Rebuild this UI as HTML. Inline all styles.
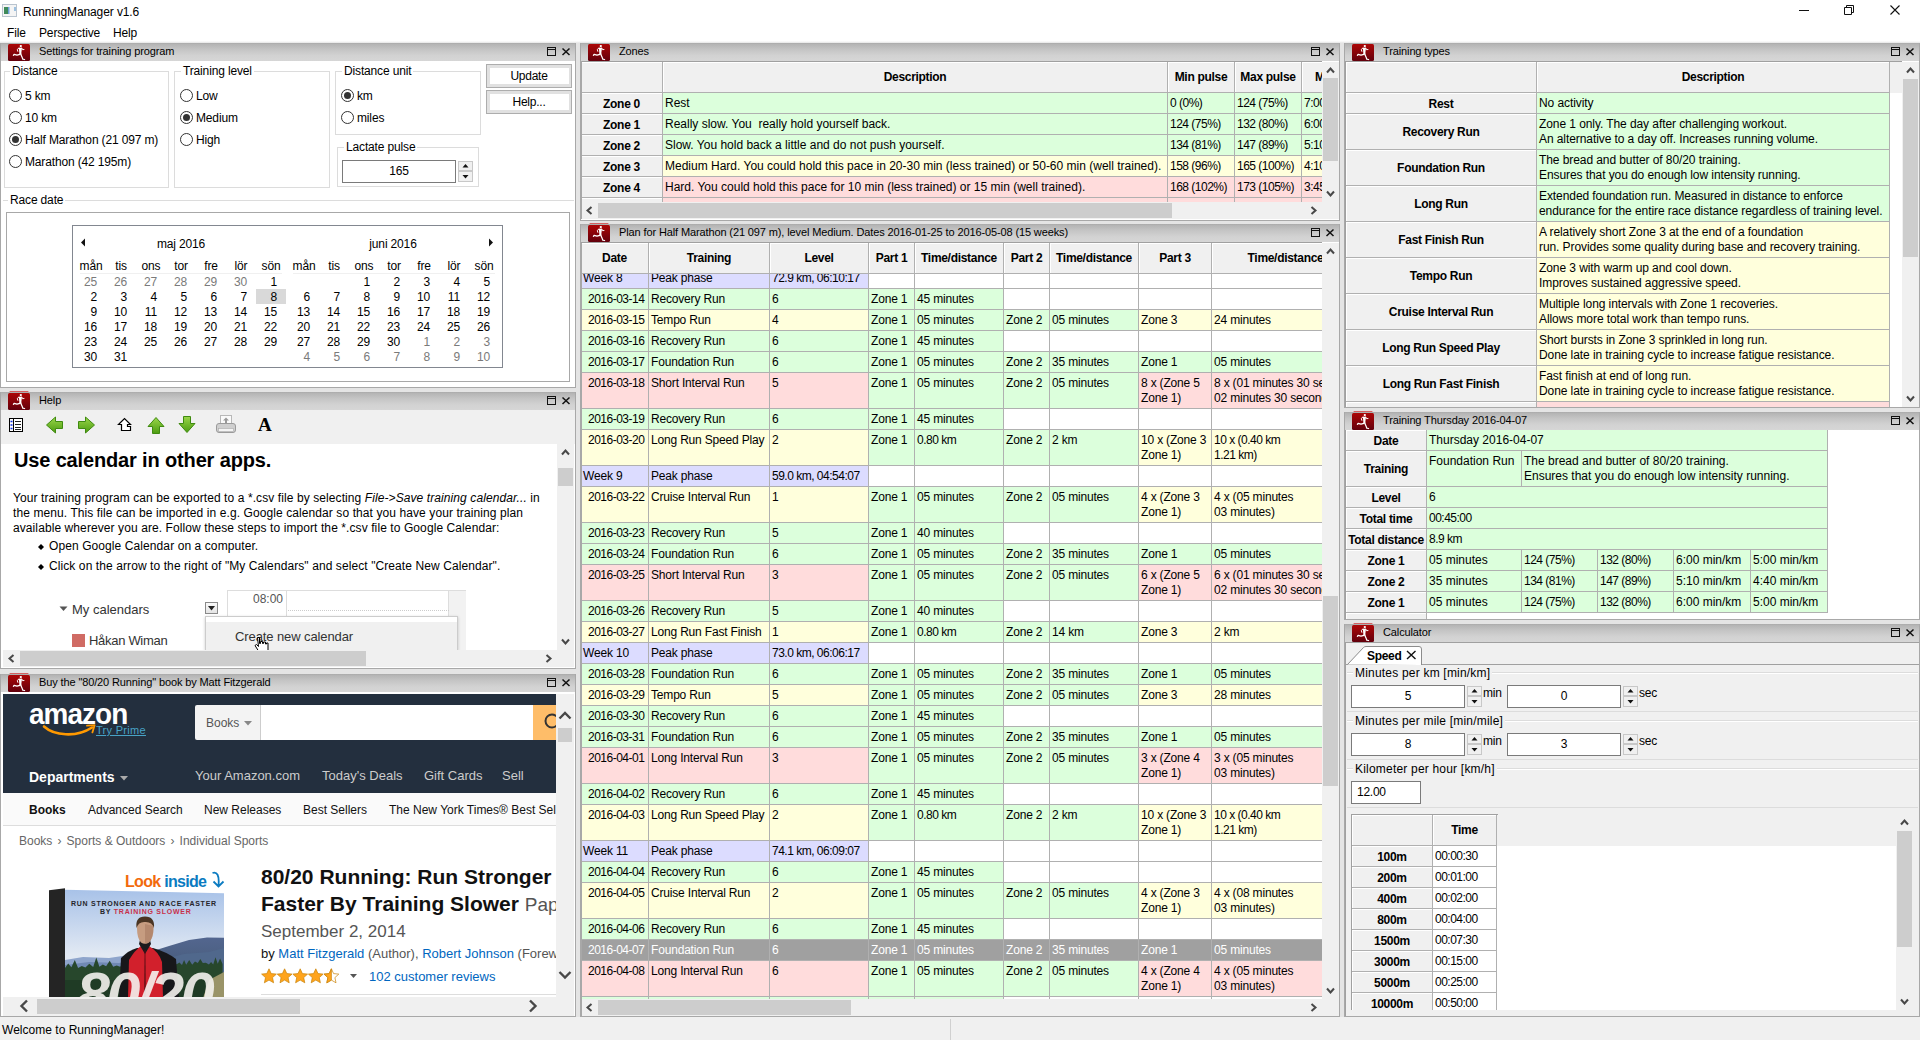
<!DOCTYPE html>
<html><head><meta charset="utf-8"><title>RunningManager v1.6</title>
<style>
html,body{margin:0;padding:0}
body{width:1920px;height:1040px;position:relative;overflow:hidden;background:#fff;font-family:"Liberation Sans",sans-serif;font-size:12px;color:#000}
div,svg.ab{position:absolute;box-sizing:border-box}
.ab{position:absolute}
.t{white-space:nowrap;line-height:16px;letter-spacing:-0.15px}
.pt{white-space:nowrap;line-height:16px;font-size:11px;letter-spacing:-0.12px}
.run{display:block;overflow:visible}
.cell{box-sizing:content-box;border-right:1px solid #b0b0b0;border-bottom:1px solid #b0b0b0;overflow:hidden;white-space:nowrap}
.cell .c{position:absolute;left:2px;top:3px;line-height:15px;letter-spacing:-0.18px;white-space:pre}
.hc{background:#f0f0f0;font-weight:bold;text-align:center;box-shadow:inset 1px 1px 0 #fff;letter-spacing:-0.3px}
.sel .c{color:#fff}
.grp{border:1px solid #dcdcdc;box-shadow:1px 1px 0 #fff, inset 1px 1px 0 #fff}
.glab{background:#fff;padding:0 2px;white-space:nowrap;line-height:16px;letter-spacing:-0.15px}
.radio{width:13px;height:13px;border:1px solid #333;border-radius:50%;background:#fff}
.radio.on::after{content:"";position:absolute;left:2px;top:2px;width:7px;height:7px;border-radius:50%;background:#333}
.spin{background:#fff;border:1px solid #7a7a7a;text-align:center;letter-spacing:-0.25px}
.sb{background:#f0f0f0;border:1px solid #c8c8c8}
.cell .c7{left:7px}
.cell .c4{left:2px}
.zt .c{letter-spacing:0}
.tt .c{letter-spacing:-0.08px}
.hp .t{letter-spacing:0.09px}
.cell .dg{letter-spacing:-0.5px}

</style></head>
<body>
<div style="left:0px;top:0px;width:1920px;height:43px;background:#fff;"></div>
<div style="left:0px;top:41px;width:1920px;height:3px;background:linear-gradient(#fff,#d8d8d8);"></div>
<div style="left:0px;top:43px;width:1920px;height:975px;background:#e4e4e4;"></div>
<div style="left:0px;top:1017px;width:1920px;height:23px;background:#f0f0f0;"></div>
<svg class="ab" style="left:2px;top:4px" width="16" height="14" viewBox="0 0 16 14"><rect x="0.5" y="0.5" width="14" height="12" fill="#f4f4f4" stroke="#b9c4cf"/><rect x="2" y="3" width="4" height="7" fill="#3f8a5a"/><rect x="6" y="3" width="1.5" height="7" fill="#6aa0d8"/><rect x="12" y="3" width="2" height="4" fill="#9cc0e0"/></svg>
<div class="t" style="left:23px;top:4px;letter-spacing:-0.1px">RunningManager v1.6</div>
<div class="t" style="left:7px;top:25px;">File</div>
<div class="t" style="left:39px;top:25px;">Perspective</div>
<div class="t" style="left:113px;top:25px;">Help</div>
<svg class="ab" style="left:1790px;top:0" width="130" height="22" viewBox="0 0 130 22"><path d="M9 10.5H19" stroke="#111" stroke-width="1"/><path d="M54.5 7.5H61.5V14.5H54.5Z M56.5 7.5V5.5H63.5V12.5H61.5" fill="none" stroke="#111" stroke-width="1"/><path d="M100.5 5.5L109.5 14.5M109.5 5.5L100.5 14.5" stroke="#111" stroke-width="1.1"/></svg>
<div class="t" style="left:2px;top:1022px;letter-spacing:0.02px">Welcome to RunningManager!</div>
<div style="left:950px;top:1019px;width:1px;height:21px;background:#d0d0d0;"></div>
<div style="left:0px;top:43px;width:576px;height:345px;background:#fff;box-shadow:inset 0 0 0 1px #a8a8a8;"></div>
<div style="left:1px;top:43px;width:574px;height:18px;background:linear-gradient(#a8a8a8 0,#b4b4b4 6%,#c4c4c4 35%,#d2d2d2 70%,#d6d6d6 100%);"></div>
<div class="ab" style="left:8px;top:43px;width:22px;height:18px;overflow:hidden"><svg class="run" viewBox="0 0 22 18" width="22" height="18"><defs><linearGradient id="rg" x1="0" y1="0" x2="0" y2="1"><stop offset="0" stop-color="#ac0606"/><stop offset="1" stop-color="#62000c"/></linearGradient></defs><rect x="1.5" y="-1" width="19" height="1" rx=".5" fill="#d04040" fill-opacity=".8"/><rect y="1" width="22" height="17" rx="1.5" fill="url(#rg)"/><g transform="translate(0,1)" fill="none" stroke="#fff" stroke-linecap="round" stroke-linejoin="round"><circle cx="12.8" cy="2.1" r="1.15" fill="#fff" stroke="none"/><path d="M10.8 3.7L14 3.7L13.4 8.6L13.5 10.5L11.3 10.5L11.3 8.6Z" fill="#fff" stroke="none"/><path d="M10.9 4L9.3 5.4L9.8 7.3" stroke-width="1"/><path d="M13.8 4.1L14.6 5.7L16 5.5" stroke-width="1"/><path d="M11.9 10.3L9 11.2L6.1 10.3L5.4 11.3" stroke-width="1.25"/><path d="M12.8 10.3L14 12.9L14.8 15.2L16.6 15.5" stroke-width="1.25"/></g></svg></div>
<div class="pt" style="left:39px;top:43px;">Settings for training program</div>
<svg class="ab" style="left:546px;top:47px" width="26" height="10" viewBox="0 0 26 10"><rect x="1.5" y="0.5" width="8" height="8" fill="none" stroke="#111" stroke-width="1"/><path d="M1 2.5H10" stroke="#111" stroke-width="1"/><path d="M16.5 1.5L23.5 8M23.5 1.5L16.5 8" stroke="#111" stroke-width="1.5"/></svg>
<div class="grp" style="left:4px;top:71px;width:165px;height:117px;"></div>
<div class="glab" style="left:10px;top:63px;">Distance</div>
<div class="radio" style="left:9px;top:89px"></div>
<div class="t" style="left:25px;top:88px;">5 km</div>
<div class="radio" style="left:9px;top:111px"></div>
<div class="t" style="left:25px;top:110px;">10 km</div>
<div class="radio on" style="left:9px;top:133px"></div>
<div class="t" style="left:25px;top:132px;">Half Marathon (21 097 m)</div>
<div class="radio" style="left:9px;top:155px"></div>
<div class="t" style="left:25px;top:154px;">Marathon (42 195m)</div>
<div class="grp" style="left:174px;top:71px;width:156px;height:117px;"></div>
<div class="glab" style="left:181px;top:63px;">Training level</div>
<div class="radio" style="left:180px;top:89px"></div>
<div class="t" style="left:196px;top:88px;">Low</div>
<div class="radio on" style="left:180px;top:111px"></div>
<div class="t" style="left:196px;top:110px;">Medium</div>
<div class="radio" style="left:180px;top:133px"></div>
<div class="t" style="left:196px;top:132px;">High</div>
<div class="grp" style="left:335px;top:71px;width:146px;height:64px;"></div>
<div class="glab" style="left:342px;top:63px;">Distance unit</div>
<div class="radio on" style="left:341px;top:89px"></div>
<div class="t" style="left:357px;top:88px;">km</div>
<div class="radio" style="left:341px;top:111px"></div>
<div class="t" style="left:357px;top:110px;">miles</div>
<div class="grp" style="left:337px;top:147px;width:142px;height:40px;"></div>
<div class="glab" style="left:344px;top:139px;">Lactate pulse</div>
<div class="spin" style="left:342px;top:160px;width:114px;height:23px;line-height:20px;">165</div>
<div class="sb" style="left:458px;top:161px;width:15px;height:10px;"></div>
<div class="sb" style="left:458px;top:171px;width:15px;height:11px;"></div>
<svg class="ab" style="left:458px;top:161px" width="15" height="21"><path d="M4.5 6.5h6l-3 -3.5z M4.5 14.0h6l-3 3.5z" fill="#111"/></svg>
<div style="left:486px;top:64px;width:86px;height:24px;background:#e1e1e1;border:1px solid #adadad;"></div>
<div style="left:489.5px;top:68px;width:79.0px;height:16px;background:#fff;text-align:center;line-height:17px;letter-spacing:-0.25px;">Update</div>
<div style="left:486px;top:90px;width:86px;height:24px;background:#e1e1e1;border:1px solid #adadad;"></div>
<div style="left:489.5px;top:94px;width:79.0px;height:16px;background:#fff;text-align:center;line-height:17px;letter-spacing:-0.25px;">Help...</div>
<div style="left:3px;top:200px;width:571px;height:186px;border-top:1px solid #dcdcdc;box-shadow:inset 0 1px 0 #fff;"></div>
<div class="glab" style="left:8px;top:192px;">Race date</div>
<div style="left:6px;top:212px;width:564px;height:170px;border:1px solid #a8a8a8;background:#fff;"></div>
<div style="left:72px;top:225px;width:431px;height:143px;background:#fff;border:1px solid #828790;"></div>
<div class="t" style="left:0px;top:236px;width:90px;left:136px;text-align:center;">maj 2016</div>
<div class="t" style="left:0px;top:236px;width:90px;left:348px;text-align:center;">juni 2016</div>
<svg class="ab" style="left:80px;top:238px" width="6" height="9"><path d="M5 0.5L1 4.5L5 8.5z" fill="#111"/></svg>
<svg class="ab" style="left:488px;top:238px" width="6" height="9"><path d="M1 0.5L5 4.5L1 8.5z" fill="#111"/></svg>
<div class="t" style="left:76px;top:258px;width:30px;text-align:center;">mån</div>
<div class="t" style="left:106px;top:258px;width:30px;text-align:center;">tis</div>
<div class="t" style="left:136px;top:258px;width:30px;text-align:center;">ons</div>
<div class="t" style="left:166px;top:258px;width:30px;text-align:center;">tor</div>
<div class="t" style="left:196px;top:258px;width:30px;text-align:center;">fre</div>
<div class="t" style="left:226px;top:258px;width:30px;text-align:center;">lör</div>
<div class="t" style="left:256px;top:258px;width:30px;text-align:center;">sön</div>
<div style="left:80px;top:273px;width:202px;height:1px;background:#f0f0f0;"></div>
<div class="t" style="left:289px;top:258px;width:30px;text-align:center;">mån</div>
<div class="t" style="left:319px;top:258px;width:30px;text-align:center;">tis</div>
<div class="t" style="left:349px;top:258px;width:30px;text-align:center;">ons</div>
<div class="t" style="left:379px;top:258px;width:30px;text-align:center;">tor</div>
<div class="t" style="left:409px;top:258px;width:30px;text-align:center;">fre</div>
<div class="t" style="left:439px;top:258px;width:30px;text-align:center;">lör</div>
<div class="t" style="left:469px;top:258px;width:30px;text-align:center;">sön</div>
<div style="left:293px;top:273px;width:202px;height:1px;background:#f0f0f0;"></div>
<div style="left:256px;top:289px;width:30px;height:15px;background:#d9d9d9;"></div>
<div class="t" style="left:76px;top:274px;width:21px;text-align:right;color:#7a7a7a;">25</div>
<div class="t" style="left:106px;top:274px;width:21px;text-align:right;color:#7a7a7a;">26</div>
<div class="t" style="left:136px;top:274px;width:21px;text-align:right;color:#7a7a7a;">27</div>
<div class="t" style="left:166px;top:274px;width:21px;text-align:right;color:#7a7a7a;">28</div>
<div class="t" style="left:196px;top:274px;width:21px;text-align:right;color:#7a7a7a;">29</div>
<div class="t" style="left:226px;top:274px;width:21px;text-align:right;color:#7a7a7a;">30</div>
<div class="t" style="left:256px;top:274px;width:21px;text-align:right;">1</div>
<div class="t" style="left:76px;top:289px;width:21px;text-align:right;">2</div>
<div class="t" style="left:106px;top:289px;width:21px;text-align:right;">3</div>
<div class="t" style="left:136px;top:289px;width:21px;text-align:right;">4</div>
<div class="t" style="left:166px;top:289px;width:21px;text-align:right;">5</div>
<div class="t" style="left:196px;top:289px;width:21px;text-align:right;">6</div>
<div class="t" style="left:226px;top:289px;width:21px;text-align:right;">7</div>
<div class="t" style="left:256px;top:289px;width:21px;text-align:right;">8</div>
<div class="t" style="left:76px;top:304px;width:21px;text-align:right;">9</div>
<div class="t" style="left:106px;top:304px;width:21px;text-align:right;">10</div>
<div class="t" style="left:136px;top:304px;width:21px;text-align:right;">11</div>
<div class="t" style="left:166px;top:304px;width:21px;text-align:right;">12</div>
<div class="t" style="left:196px;top:304px;width:21px;text-align:right;">13</div>
<div class="t" style="left:226px;top:304px;width:21px;text-align:right;">14</div>
<div class="t" style="left:256px;top:304px;width:21px;text-align:right;">15</div>
<div class="t" style="left:76px;top:319px;width:21px;text-align:right;">16</div>
<div class="t" style="left:106px;top:319px;width:21px;text-align:right;">17</div>
<div class="t" style="left:136px;top:319px;width:21px;text-align:right;">18</div>
<div class="t" style="left:166px;top:319px;width:21px;text-align:right;">19</div>
<div class="t" style="left:196px;top:319px;width:21px;text-align:right;">20</div>
<div class="t" style="left:226px;top:319px;width:21px;text-align:right;">21</div>
<div class="t" style="left:256px;top:319px;width:21px;text-align:right;">22</div>
<div class="t" style="left:76px;top:334px;width:21px;text-align:right;">23</div>
<div class="t" style="left:106px;top:334px;width:21px;text-align:right;">24</div>
<div class="t" style="left:136px;top:334px;width:21px;text-align:right;">25</div>
<div class="t" style="left:166px;top:334px;width:21px;text-align:right;">26</div>
<div class="t" style="left:196px;top:334px;width:21px;text-align:right;">27</div>
<div class="t" style="left:226px;top:334px;width:21px;text-align:right;">28</div>
<div class="t" style="left:256px;top:334px;width:21px;text-align:right;">29</div>
<div class="t" style="left:76px;top:349px;width:21px;text-align:right;">30</div>
<div class="t" style="left:106px;top:349px;width:21px;text-align:right;">31</div>
<div class="t" style="left:349px;top:274px;width:21px;text-align:right;">1</div>
<div class="t" style="left:379px;top:274px;width:21px;text-align:right;">2</div>
<div class="t" style="left:409px;top:274px;width:21px;text-align:right;">3</div>
<div class="t" style="left:439px;top:274px;width:21px;text-align:right;">4</div>
<div class="t" style="left:469px;top:274px;width:21px;text-align:right;">5</div>
<div class="t" style="left:289px;top:289px;width:21px;text-align:right;">6</div>
<div class="t" style="left:319px;top:289px;width:21px;text-align:right;">7</div>
<div class="t" style="left:349px;top:289px;width:21px;text-align:right;">8</div>
<div class="t" style="left:379px;top:289px;width:21px;text-align:right;">9</div>
<div class="t" style="left:409px;top:289px;width:21px;text-align:right;">10</div>
<div class="t" style="left:439px;top:289px;width:21px;text-align:right;">11</div>
<div class="t" style="left:469px;top:289px;width:21px;text-align:right;">12</div>
<div class="t" style="left:289px;top:304px;width:21px;text-align:right;">13</div>
<div class="t" style="left:319px;top:304px;width:21px;text-align:right;">14</div>
<div class="t" style="left:349px;top:304px;width:21px;text-align:right;">15</div>
<div class="t" style="left:379px;top:304px;width:21px;text-align:right;">16</div>
<div class="t" style="left:409px;top:304px;width:21px;text-align:right;">17</div>
<div class="t" style="left:439px;top:304px;width:21px;text-align:right;">18</div>
<div class="t" style="left:469px;top:304px;width:21px;text-align:right;">19</div>
<div class="t" style="left:289px;top:319px;width:21px;text-align:right;">20</div>
<div class="t" style="left:319px;top:319px;width:21px;text-align:right;">21</div>
<div class="t" style="left:349px;top:319px;width:21px;text-align:right;">22</div>
<div class="t" style="left:379px;top:319px;width:21px;text-align:right;">23</div>
<div class="t" style="left:409px;top:319px;width:21px;text-align:right;">24</div>
<div class="t" style="left:439px;top:319px;width:21px;text-align:right;">25</div>
<div class="t" style="left:469px;top:319px;width:21px;text-align:right;">26</div>
<div class="t" style="left:289px;top:334px;width:21px;text-align:right;">27</div>
<div class="t" style="left:319px;top:334px;width:21px;text-align:right;">28</div>
<div class="t" style="left:349px;top:334px;width:21px;text-align:right;">29</div>
<div class="t" style="left:379px;top:334px;width:21px;text-align:right;">30</div>
<div class="t" style="left:409px;top:334px;width:21px;text-align:right;color:#7a7a7a;">1</div>
<div class="t" style="left:439px;top:334px;width:21px;text-align:right;color:#7a7a7a;">2</div>
<div class="t" style="left:469px;top:334px;width:21px;text-align:right;color:#7a7a7a;">3</div>
<div class="t" style="left:289px;top:349px;width:21px;text-align:right;color:#7a7a7a;">4</div>
<div class="t" style="left:319px;top:349px;width:21px;text-align:right;color:#7a7a7a;">5</div>
<div class="t" style="left:349px;top:349px;width:21px;text-align:right;color:#7a7a7a;">6</div>
<div class="t" style="left:379px;top:349px;width:21px;text-align:right;color:#7a7a7a;">7</div>
<div class="t" style="left:409px;top:349px;width:21px;text-align:right;color:#7a7a7a;">8</div>
<div class="t" style="left:439px;top:349px;width:21px;text-align:right;color:#7a7a7a;">9</div>
<div class="t" style="left:469px;top:349px;width:21px;text-align:right;color:#7a7a7a;">10</div>
<div style="left:580px;top:43px;width:760px;height:178px;background:#fff;box-shadow:inset 0 0 0 1px #a8a8a8;"></div>
<div style="left:581px;top:43px;width:758px;height:18px;background:linear-gradient(#a8a8a8 0,#b4b4b4 6%,#c4c4c4 35%,#d2d2d2 70%,#d6d6d6 100%);"></div>
<div class="ab" style="left:588px;top:43px;width:22px;height:18px;overflow:hidden"><svg class="run" viewBox="0 0 22 18" width="22" height="18"><defs><linearGradient id="rg" x1="0" y1="0" x2="0" y2="1"><stop offset="0" stop-color="#ac0606"/><stop offset="1" stop-color="#62000c"/></linearGradient></defs><rect x="1.5" y="-1" width="19" height="1" rx=".5" fill="#d04040" fill-opacity=".8"/><rect y="1" width="22" height="17" rx="1.5" fill="url(#rg)"/><g transform="translate(0,1)" fill="none" stroke="#fff" stroke-linecap="round" stroke-linejoin="round"><circle cx="12.8" cy="2.1" r="1.15" fill="#fff" stroke="none"/><path d="M10.8 3.7L14 3.7L13.4 8.6L13.5 10.5L11.3 10.5L11.3 8.6Z" fill="#fff" stroke="none"/><path d="M10.9 4L9.3 5.4L9.8 7.3" stroke-width="1"/><path d="M13.8 4.1L14.6 5.7L16 5.5" stroke-width="1"/><path d="M11.9 10.3L9 11.2L6.1 10.3L5.4 11.3" stroke-width="1.25"/><path d="M12.8 10.3L14 12.9L14.8 15.2L16.6 15.5" stroke-width="1.25"/></g></svg></div>
<div class="pt" style="left:619px;top:43px;">Zones</div>
<svg class="ab" style="left:1310px;top:47px" width="26" height="10" viewBox="0 0 26 10"><rect x="1.5" y="0.5" width="8" height="8" fill="none" stroke="#111" stroke-width="1"/><path d="M1 2.5H10" stroke="#111" stroke-width="1"/><path d="M16.5 1.5L23.5 8M23.5 1.5L16.5 8" stroke="#111" stroke-width="1.5"/></svg>
<div style="left:581px;top:62px;width:741px;height:140px;overflow:hidden;background:#fff" class="zt">
<div class="cell hc" style="left:0px;top:0px;width:81px;height:30px;line-height:30px;"></div>
<div class="cell hc" style="left:82px;top:0px;width:504px;height:30px;line-height:30px;">Description</div>
<div class="cell hc" style="left:587px;top:0px;width:66px;height:30px;line-height:30px;">Min pulse</div>
<div class="cell hc" style="left:654px;top:0px;width:66px;height:30px;line-height:30px;">Max pulse</div>
<div class="cell hc" style="left:721px;top:0px;width:66px;height:30px;line-height:30px;text-align:left;text-indent:13px;">Min pace</div>
<div class="cell hc" style="left:0px;top:31px;width:81px;height:20px;line-height:22px;">Zone 0</div>
<div class="cell" style="left:82px;top:31px;width:504px;height:20px;background:#dcffdc;"><span class="c">Rest</span></div>
<div class="cell" style="left:587px;top:31px;width:66px;height:20px;background:#dcffdc;"><span class="c dg">0 (0%)</span></div>
<div class="cell" style="left:654px;top:31px;width:66px;height:20px;background:#dcffdc;"><span class="c dg">124 (75%)</span></div>
<div class="cell" style="left:721px;top:31px;width:66px;height:20px;background:#dcffdc;"><span class="c dg">7:00</span></div>
<div class="cell hc" style="left:0px;top:52px;width:81px;height:20px;line-height:22px;">Zone 1</div>
<div class="cell" style="left:82px;top:52px;width:504px;height:20px;background:#dcffdc;"><span class="c">Really slow. You  really hold yourself back.</span></div>
<div class="cell" style="left:587px;top:52px;width:66px;height:20px;background:#dcffdc;"><span class="c dg">124 (75%)</span></div>
<div class="cell" style="left:654px;top:52px;width:66px;height:20px;background:#dcffdc;"><span class="c dg">132 (80%)</span></div>
<div class="cell" style="left:721px;top:52px;width:66px;height:20px;background:#dcffdc;"><span class="c dg">6:00</span></div>
<div class="cell hc" style="left:0px;top:73px;width:81px;height:20px;line-height:22px;">Zone 2</div>
<div class="cell" style="left:82px;top:73px;width:504px;height:20px;background:#dcffdc;"><span class="c">Slow. You hold back a little and do not push yourself.</span></div>
<div class="cell" style="left:587px;top:73px;width:66px;height:20px;background:#dcffdc;"><span class="c dg">134 (81%)</span></div>
<div class="cell" style="left:654px;top:73px;width:66px;height:20px;background:#dcffdc;"><span class="c dg">147 (89%)</span></div>
<div class="cell" style="left:721px;top:73px;width:66px;height:20px;background:#dcffdc;"><span class="c dg">5:10</span></div>
<div class="cell hc" style="left:0px;top:94px;width:81px;height:20px;line-height:22px;">Zone 3</div>
<div class="cell" style="left:82px;top:94px;width:504px;height:20px;background:#ffffdc;"><span class="c">Medium Hard. You could hold this pace in 20-30 min (less trained) or 50-60 min (well trained).</span></div>
<div class="cell" style="left:587px;top:94px;width:66px;height:20px;background:#ffffdc;"><span class="c dg">158 (96%)</span></div>
<div class="cell" style="left:654px;top:94px;width:66px;height:20px;background:#ffffdc;"><span class="c dg">165 (100%)</span></div>
<div class="cell" style="left:721px;top:94px;width:66px;height:20px;background:#ffffdc;"><span class="c dg">4:10</span></div>
<div class="cell hc" style="left:0px;top:115px;width:81px;height:20px;line-height:22px;">Zone 4</div>
<div class="cell" style="left:82px;top:115px;width:504px;height:20px;background:#ffdcdc;"><span class="c">Hard. You could hold this pace for 10 min (less trained) or 15 min (well trained).</span></div>
<div class="cell" style="left:587px;top:115px;width:66px;height:20px;background:#ffdcdc;"><span class="c dg">168 (102%)</span></div>
<div class="cell" style="left:654px;top:115px;width:66px;height:20px;background:#ffdcdc;"><span class="c dg">173 (105%)</span></div>
<div class="cell" style="left:721px;top:115px;width:66px;height:20px;background:#ffdcdc;"><span class="c dg">3:45</span></div>
<div class="cell hc" style="left:0px;top:136px;width:81px;height:20px;line-height:22px;">Zone 5</div>
<div class="cell" style="left:82px;top:136px;width:504px;height:20px;background:#ffdcdc;"></div>
<div class="cell" style="left:587px;top:136px;width:66px;height:20px;background:#ffdcdc;"></div>
<div class="cell" style="left:654px;top:136px;width:66px;height:20px;background:#ffdcdc;"></div>
<div class="cell" style="left:721px;top:136px;width:66px;height:20px;background:#ffdcdc;"></div>
</div>
<div style="left:1322px;top:62px;width:17px;height:140px;background:#f0f0f0;"></div>
<div style="left:1323px;top:78px;width:15px;height:83px;background:#cdcdcd;"></div>
<svg class="ab" style="left:1322px;top:62px" width="17" height="17" viewBox="0 0 17 17"><path d="M5 10.500L8.500 6.500L12 10.500" fill="none" stroke="#484848" stroke-width="2"/></svg>
<svg class="ab" style="left:1322px;top:185px" width="17" height="17" viewBox="0 0 17 17"><path d="M5 6.500L8.500 10.500L12 6.500" fill="none" stroke="#484848" stroke-width="2"/></svg>
<div style="left:581px;top:202px;width:741px;height:17px;background:#f0f0f0;"></div>
<div style="left:598px;top:203px;width:574px;height:15px;background:#cdcdcd;"></div>
<svg class="ab" style="left:581px;top:202px" width="17" height="17" viewBox="0 0 17 17"><path d="M10.500 5L6.500 8.500L10.500 12" fill="none" stroke="#484848" stroke-width="2"/></svg>
<svg class="ab" style="left:1305px;top:202px" width="17" height="17" viewBox="0 0 17 17"><path d="M6.500 5L10.500 8.500L6.500 12" fill="none" stroke="#484848" stroke-width="2"/></svg>
<div style="left:1322px;top:202px;width:17px;height:17px;background:#f0f0f0;"></div>
<div style="left:580px;top:224px;width:760px;height:793px;background:#fff;box-shadow:inset 0 0 0 1px #a8a8a8;"></div>
<div style="left:581px;top:224px;width:758px;height:18px;background:linear-gradient(#a8a8a8 0,#b4b4b4 6%,#c4c4c4 35%,#d2d2d2 70%,#d6d6d6 100%);"></div>
<div class="ab" style="left:588px;top:224px;width:22px;height:18px;overflow:visible"><svg class="run" viewBox="0 0 22 18" width="22" height="18"><defs><linearGradient id="rg" x1="0" y1="0" x2="0" y2="1"><stop offset="0" stop-color="#ac0606"/><stop offset="1" stop-color="#62000c"/></linearGradient></defs><rect x="1.5" y="-1" width="19" height="1" rx=".5" fill="#d04040" fill-opacity=".8"/><rect y="1" width="22" height="17" rx="1.5" fill="url(#rg)"/><g transform="translate(0,1)" fill="none" stroke="#fff" stroke-linecap="round" stroke-linejoin="round"><circle cx="12.8" cy="2.1" r="1.15" fill="#fff" stroke="none"/><path d="M10.8 3.7L14 3.7L13.4 8.6L13.5 10.5L11.3 10.5L11.3 8.6Z" fill="#fff" stroke="none"/><path d="M10.9 4L9.3 5.4L9.8 7.3" stroke-width="1"/><path d="M13.8 4.1L14.6 5.7L16 5.5" stroke-width="1"/><path d="M11.9 10.3L9 11.2L6.1 10.3L5.4 11.3" stroke-width="1.25"/><path d="M12.8 10.3L14 12.9L14.8 15.2L16.6 15.5" stroke-width="1.25"/></g></svg></div>
<div class="pt" style="left:619px;top:224px;">Plan for Half Marathon (21 097 m), level Medium. Dates 2016-01-25 to 2016-05-08 (15 weeks)</div>
<svg class="ab" style="left:1310px;top:228px" width="26" height="10" viewBox="0 0 26 10"><rect x="1.5" y="0.5" width="8" height="8" fill="none" stroke="#111" stroke-width="1"/><path d="M1 2.5H10" stroke="#111" stroke-width="1"/><path d="M16.5 1.5L23.5 8M23.5 1.5L16.5 8" stroke="#111" stroke-width="1.5"/></svg>
<div style="left:581px;top:243px;width:741px;height:756px;overflow:hidden;background:#fff">
<div class="cell" style="left:0px;top:25px;width:67px;height:20px;background:#dcdcff;"><span class="c">Week 8</span></div>
<div class="cell" style="left:68px;top:25px;width:120px;height:20px;background:#dcdcff;"><span class="c c4">Peak phase</span></div>
<div class="cell" style="left:189px;top:25px;width:98px;height:20px;background:#dcdcff;"><span class="c dg">72.9 km, 06:10:17</span></div>
<div class="cell" style="left:288px;top:25px;width:45px;height:20px;background:#fff;"></div>
<div class="cell" style="left:334px;top:25px;width:88px;height:20px;background:#fff;"></div>
<div class="cell" style="left:423px;top:25px;width:45px;height:20px;background:#fff;"></div>
<div class="cell" style="left:469px;top:25px;width:88px;height:20px;background:#fff;"></div>
<div class="cell" style="left:558px;top:25px;width:72px;height:20px;background:#fff;"></div>
<div class="cell" style="left:631px;top:25px;width:147px;height:20px;background:#fff;"></div>
<div class="cell" style="left:0px;top:46px;width:67px;height:20px;background:#dcffdc;"><span class="c c7 dg">2016-03-14</span></div>
<div class="cell" style="left:68px;top:46px;width:120px;height:20px;background:#dcffdc;"><span class="c c4">Recovery Run</span></div>
<div class="cell" style="left:189px;top:46px;width:98px;height:20px;background:#dcffdc;"><span class="c">6</span></div>
<div class="cell" style="left:288px;top:46px;width:45px;height:20px;background:#dcffdc;"><span class="c">Zone 1</span></div>
<div class="cell" style="left:334px;top:46px;width:88px;height:20px;background:#dcffdc;"><span class="c">45 minutes</span></div>
<div class="cell" style="left:423px;top:46px;width:45px;height:20px;background:#fff;"></div>
<div class="cell" style="left:469px;top:46px;width:88px;height:20px;background:#fff;"></div>
<div class="cell" style="left:558px;top:46px;width:72px;height:20px;background:#fff;"></div>
<div class="cell" style="left:631px;top:46px;width:147px;height:20px;background:#fff;"></div>
<div class="cell" style="left:0px;top:67px;width:67px;height:20px;background:#ffffdc;"><span class="c c7 dg">2016-03-15</span></div>
<div class="cell" style="left:68px;top:67px;width:120px;height:20px;background:#ffffdc;"><span class="c c4">Tempo Run</span></div>
<div class="cell" style="left:189px;top:67px;width:98px;height:20px;background:#ffffdc;"><span class="c">4</span></div>
<div class="cell" style="left:288px;top:67px;width:45px;height:20px;background:#dcffdc;"><span class="c">Zone 1</span></div>
<div class="cell" style="left:334px;top:67px;width:88px;height:20px;background:#dcffdc;"><span class="c">05 minutes</span></div>
<div class="cell" style="left:423px;top:67px;width:45px;height:20px;background:#dcffdc;"><span class="c">Zone 2</span></div>
<div class="cell" style="left:469px;top:67px;width:88px;height:20px;background:#dcffdc;"><span class="c">05 minutes</span></div>
<div class="cell" style="left:558px;top:67px;width:72px;height:20px;background:#ffffdc;"><span class="c">Zone 3</span></div>
<div class="cell" style="left:631px;top:67px;width:147px;height:20px;background:#ffffdc;"><span class="c">24 minutes</span></div>
<div class="cell" style="left:0px;top:88px;width:67px;height:20px;background:#dcffdc;"><span class="c c7 dg">2016-03-16</span></div>
<div class="cell" style="left:68px;top:88px;width:120px;height:20px;background:#dcffdc;"><span class="c c4">Recovery Run</span></div>
<div class="cell" style="left:189px;top:88px;width:98px;height:20px;background:#dcffdc;"><span class="c">6</span></div>
<div class="cell" style="left:288px;top:88px;width:45px;height:20px;background:#dcffdc;"><span class="c">Zone 1</span></div>
<div class="cell" style="left:334px;top:88px;width:88px;height:20px;background:#dcffdc;"><span class="c">45 minutes</span></div>
<div class="cell" style="left:423px;top:88px;width:45px;height:20px;background:#fff;"></div>
<div class="cell" style="left:469px;top:88px;width:88px;height:20px;background:#fff;"></div>
<div class="cell" style="left:558px;top:88px;width:72px;height:20px;background:#fff;"></div>
<div class="cell" style="left:631px;top:88px;width:147px;height:20px;background:#fff;"></div>
<div class="cell" style="left:0px;top:109px;width:67px;height:20px;background:#dcffdc;"><span class="c c7 dg">2016-03-17</span></div>
<div class="cell" style="left:68px;top:109px;width:120px;height:20px;background:#dcffdc;"><span class="c c4">Foundation Run</span></div>
<div class="cell" style="left:189px;top:109px;width:98px;height:20px;background:#dcffdc;"><span class="c">6</span></div>
<div class="cell" style="left:288px;top:109px;width:45px;height:20px;background:#dcffdc;"><span class="c">Zone 1</span></div>
<div class="cell" style="left:334px;top:109px;width:88px;height:20px;background:#dcffdc;"><span class="c">05 minutes</span></div>
<div class="cell" style="left:423px;top:109px;width:45px;height:20px;background:#dcffdc;"><span class="c">Zone 2</span></div>
<div class="cell" style="left:469px;top:109px;width:88px;height:20px;background:#dcffdc;"><span class="c">35 minutes</span></div>
<div class="cell" style="left:558px;top:109px;width:72px;height:20px;background:#dcffdc;"><span class="c">Zone 1</span></div>
<div class="cell" style="left:631px;top:109px;width:147px;height:20px;background:#dcffdc;"><span class="c">05 minutes</span></div>
<div class="cell" style="left:0px;top:130px;width:67px;height:35px;background:#ffdcdc;"><span class="c c7 dg">2016-03-18</span></div>
<div class="cell" style="left:68px;top:130px;width:120px;height:35px;background:#ffdcdc;"><span class="c c4">Short Interval Run</span></div>
<div class="cell" style="left:189px;top:130px;width:98px;height:35px;background:#ffdcdc;"><span class="c">5</span></div>
<div class="cell" style="left:288px;top:130px;width:45px;height:35px;background:#dcffdc;"><span class="c">Zone 1</span></div>
<div class="cell" style="left:334px;top:130px;width:88px;height:35px;background:#dcffdc;"><span class="c">05 minutes</span></div>
<div class="cell" style="left:423px;top:130px;width:45px;height:35px;background:#dcffdc;"><span class="c">Zone 2</span></div>
<div class="cell" style="left:469px;top:130px;width:88px;height:35px;background:#dcffdc;"><span class="c">05 minutes</span></div>
<div class="cell" style="left:558px;top:130px;width:72px;height:35px;background:#ffdcdc;"><span class="c">8 x (Zone 5
Zone 1)</span></div>
<div class="cell" style="left:631px;top:130px;width:147px;height:35px;background:#ffdcdc;"><span class="c">8 x (01 minutes 30 seconds
02 minutes 30 seconds)</span></div>
<div class="cell" style="left:0px;top:166px;width:67px;height:20px;background:#dcffdc;"><span class="c c7 dg">2016-03-19</span></div>
<div class="cell" style="left:68px;top:166px;width:120px;height:20px;background:#dcffdc;"><span class="c c4">Recovery Run</span></div>
<div class="cell" style="left:189px;top:166px;width:98px;height:20px;background:#dcffdc;"><span class="c">6</span></div>
<div class="cell" style="left:288px;top:166px;width:45px;height:20px;background:#dcffdc;"><span class="c">Zone 1</span></div>
<div class="cell" style="left:334px;top:166px;width:88px;height:20px;background:#dcffdc;"><span class="c">45 minutes</span></div>
<div class="cell" style="left:423px;top:166px;width:45px;height:20px;background:#fff;"></div>
<div class="cell" style="left:469px;top:166px;width:88px;height:20px;background:#fff;"></div>
<div class="cell" style="left:558px;top:166px;width:72px;height:20px;background:#fff;"></div>
<div class="cell" style="left:631px;top:166px;width:147px;height:20px;background:#fff;"></div>
<div class="cell" style="left:0px;top:187px;width:67px;height:35px;background:#ffffdc;"><span class="c c7 dg">2016-03-20</span></div>
<div class="cell" style="left:68px;top:187px;width:120px;height:35px;background:#ffffdc;"><span class="c c4">Long Run Speed Play</span></div>
<div class="cell" style="left:189px;top:187px;width:98px;height:35px;background:#ffffdc;"><span class="c">2</span></div>
<div class="cell" style="left:288px;top:187px;width:45px;height:35px;background:#dcffdc;"><span class="c">Zone 1</span></div>
<div class="cell" style="left:334px;top:187px;width:88px;height:35px;background:#dcffdc;"><span class="c dg">0.80 km</span></div>
<div class="cell" style="left:423px;top:187px;width:45px;height:35px;background:#dcffdc;"><span class="c">Zone 2</span></div>
<div class="cell" style="left:469px;top:187px;width:88px;height:35px;background:#dcffdc;"><span class="c">2 km</span></div>
<div class="cell" style="left:558px;top:187px;width:72px;height:35px;background:#ffffdc;"><span class="c">10 x (Zone 3
Zone 1)</span></div>
<div class="cell" style="left:631px;top:187px;width:147px;height:35px;background:#ffffdc;"><span class="c dg">10 x (0.40 km
1.21 km)</span></div>
<div class="cell" style="left:0px;top:223px;width:67px;height:20px;background:#dcdcff;"><span class="c">Week 9</span></div>
<div class="cell" style="left:68px;top:223px;width:120px;height:20px;background:#dcdcff;"><span class="c c4">Peak phase</span></div>
<div class="cell" style="left:189px;top:223px;width:98px;height:20px;background:#dcdcff;"><span class="c dg">59.0 km, 04:54:07</span></div>
<div class="cell" style="left:288px;top:223px;width:45px;height:20px;background:#fff;"></div>
<div class="cell" style="left:334px;top:223px;width:88px;height:20px;background:#fff;"></div>
<div class="cell" style="left:423px;top:223px;width:45px;height:20px;background:#fff;"></div>
<div class="cell" style="left:469px;top:223px;width:88px;height:20px;background:#fff;"></div>
<div class="cell" style="left:558px;top:223px;width:72px;height:20px;background:#fff;"></div>
<div class="cell" style="left:631px;top:223px;width:147px;height:20px;background:#fff;"></div>
<div class="cell" style="left:0px;top:244px;width:67px;height:35px;background:#ffffdc;"><span class="c c7 dg">2016-03-22</span></div>
<div class="cell" style="left:68px;top:244px;width:120px;height:35px;background:#ffffdc;"><span class="c c4">Cruise Interval Run</span></div>
<div class="cell" style="left:189px;top:244px;width:98px;height:35px;background:#ffffdc;"><span class="c">1</span></div>
<div class="cell" style="left:288px;top:244px;width:45px;height:35px;background:#dcffdc;"><span class="c">Zone 1</span></div>
<div class="cell" style="left:334px;top:244px;width:88px;height:35px;background:#dcffdc;"><span class="c">05 minutes</span></div>
<div class="cell" style="left:423px;top:244px;width:45px;height:35px;background:#dcffdc;"><span class="c">Zone 2</span></div>
<div class="cell" style="left:469px;top:244px;width:88px;height:35px;background:#dcffdc;"><span class="c">05 minutes</span></div>
<div class="cell" style="left:558px;top:244px;width:72px;height:35px;background:#ffffdc;"><span class="c">4 x (Zone 3
Zone 1)</span></div>
<div class="cell" style="left:631px;top:244px;width:147px;height:35px;background:#ffffdc;"><span class="c">4 x (05 minutes
03 minutes)</span></div>
<div class="cell" style="left:0px;top:280px;width:67px;height:20px;background:#dcffdc;"><span class="c c7 dg">2016-03-23</span></div>
<div class="cell" style="left:68px;top:280px;width:120px;height:20px;background:#dcffdc;"><span class="c c4">Recovery Run</span></div>
<div class="cell" style="left:189px;top:280px;width:98px;height:20px;background:#dcffdc;"><span class="c">5</span></div>
<div class="cell" style="left:288px;top:280px;width:45px;height:20px;background:#dcffdc;"><span class="c">Zone 1</span></div>
<div class="cell" style="left:334px;top:280px;width:88px;height:20px;background:#dcffdc;"><span class="c">40 minutes</span></div>
<div class="cell" style="left:423px;top:280px;width:45px;height:20px;background:#fff;"></div>
<div class="cell" style="left:469px;top:280px;width:88px;height:20px;background:#fff;"></div>
<div class="cell" style="left:558px;top:280px;width:72px;height:20px;background:#fff;"></div>
<div class="cell" style="left:631px;top:280px;width:147px;height:20px;background:#fff;"></div>
<div class="cell" style="left:0px;top:301px;width:67px;height:20px;background:#dcffdc;"><span class="c c7 dg">2016-03-24</span></div>
<div class="cell" style="left:68px;top:301px;width:120px;height:20px;background:#dcffdc;"><span class="c c4">Foundation Run</span></div>
<div class="cell" style="left:189px;top:301px;width:98px;height:20px;background:#dcffdc;"><span class="c">6</span></div>
<div class="cell" style="left:288px;top:301px;width:45px;height:20px;background:#dcffdc;"><span class="c">Zone 1</span></div>
<div class="cell" style="left:334px;top:301px;width:88px;height:20px;background:#dcffdc;"><span class="c">05 minutes</span></div>
<div class="cell" style="left:423px;top:301px;width:45px;height:20px;background:#dcffdc;"><span class="c">Zone 2</span></div>
<div class="cell" style="left:469px;top:301px;width:88px;height:20px;background:#dcffdc;"><span class="c">35 minutes</span></div>
<div class="cell" style="left:558px;top:301px;width:72px;height:20px;background:#dcffdc;"><span class="c">Zone 1</span></div>
<div class="cell" style="left:631px;top:301px;width:147px;height:20px;background:#dcffdc;"><span class="c">05 minutes</span></div>
<div class="cell" style="left:0px;top:322px;width:67px;height:35px;background:#ffdcdc;"><span class="c c7 dg">2016-03-25</span></div>
<div class="cell" style="left:68px;top:322px;width:120px;height:35px;background:#ffdcdc;"><span class="c c4">Short Interval Run</span></div>
<div class="cell" style="left:189px;top:322px;width:98px;height:35px;background:#ffdcdc;"><span class="c">3</span></div>
<div class="cell" style="left:288px;top:322px;width:45px;height:35px;background:#dcffdc;"><span class="c">Zone 1</span></div>
<div class="cell" style="left:334px;top:322px;width:88px;height:35px;background:#dcffdc;"><span class="c">05 minutes</span></div>
<div class="cell" style="left:423px;top:322px;width:45px;height:35px;background:#dcffdc;"><span class="c">Zone 2</span></div>
<div class="cell" style="left:469px;top:322px;width:88px;height:35px;background:#dcffdc;"><span class="c">05 minutes</span></div>
<div class="cell" style="left:558px;top:322px;width:72px;height:35px;background:#ffdcdc;"><span class="c">6 x (Zone 5
Zone 1)</span></div>
<div class="cell" style="left:631px;top:322px;width:147px;height:35px;background:#ffdcdc;"><span class="c">6 x (01 minutes 30 seconds
02 minutes 30 seconds)</span></div>
<div class="cell" style="left:0px;top:358px;width:67px;height:20px;background:#dcffdc;"><span class="c c7 dg">2016-03-26</span></div>
<div class="cell" style="left:68px;top:358px;width:120px;height:20px;background:#dcffdc;"><span class="c c4">Recovery Run</span></div>
<div class="cell" style="left:189px;top:358px;width:98px;height:20px;background:#dcffdc;"><span class="c">5</span></div>
<div class="cell" style="left:288px;top:358px;width:45px;height:20px;background:#dcffdc;"><span class="c">Zone 1</span></div>
<div class="cell" style="left:334px;top:358px;width:88px;height:20px;background:#dcffdc;"><span class="c">40 minutes</span></div>
<div class="cell" style="left:423px;top:358px;width:45px;height:20px;background:#fff;"></div>
<div class="cell" style="left:469px;top:358px;width:88px;height:20px;background:#fff;"></div>
<div class="cell" style="left:558px;top:358px;width:72px;height:20px;background:#fff;"></div>
<div class="cell" style="left:631px;top:358px;width:147px;height:20px;background:#fff;"></div>
<div class="cell" style="left:0px;top:379px;width:67px;height:20px;background:#ffffdc;"><span class="c c7 dg">2016-03-27</span></div>
<div class="cell" style="left:68px;top:379px;width:120px;height:20px;background:#ffffdc;"><span class="c c4">Long Run Fast Finish</span></div>
<div class="cell" style="left:189px;top:379px;width:98px;height:20px;background:#ffffdc;"><span class="c">1</span></div>
<div class="cell" style="left:288px;top:379px;width:45px;height:20px;background:#dcffdc;"><span class="c">Zone 1</span></div>
<div class="cell" style="left:334px;top:379px;width:88px;height:20px;background:#dcffdc;"><span class="c dg">0.80 km</span></div>
<div class="cell" style="left:423px;top:379px;width:45px;height:20px;background:#dcffdc;"><span class="c">Zone 2</span></div>
<div class="cell" style="left:469px;top:379px;width:88px;height:20px;background:#dcffdc;"><span class="c">14 km</span></div>
<div class="cell" style="left:558px;top:379px;width:72px;height:20px;background:#ffffdc;"><span class="c">Zone 3</span></div>
<div class="cell" style="left:631px;top:379px;width:147px;height:20px;background:#ffffdc;"><span class="c">2 km</span></div>
<div class="cell" style="left:0px;top:400px;width:67px;height:20px;background:#dcdcff;"><span class="c">Week 10</span></div>
<div class="cell" style="left:68px;top:400px;width:120px;height:20px;background:#dcdcff;"><span class="c c4">Peak phase</span></div>
<div class="cell" style="left:189px;top:400px;width:98px;height:20px;background:#dcdcff;"><span class="c dg">73.0 km, 06:06:17</span></div>
<div class="cell" style="left:288px;top:400px;width:45px;height:20px;background:#fff;"></div>
<div class="cell" style="left:334px;top:400px;width:88px;height:20px;background:#fff;"></div>
<div class="cell" style="left:423px;top:400px;width:45px;height:20px;background:#fff;"></div>
<div class="cell" style="left:469px;top:400px;width:88px;height:20px;background:#fff;"></div>
<div class="cell" style="left:558px;top:400px;width:72px;height:20px;background:#fff;"></div>
<div class="cell" style="left:631px;top:400px;width:147px;height:20px;background:#fff;"></div>
<div class="cell" style="left:0px;top:421px;width:67px;height:20px;background:#dcffdc;"><span class="c c7 dg">2016-03-28</span></div>
<div class="cell" style="left:68px;top:421px;width:120px;height:20px;background:#dcffdc;"><span class="c c4">Foundation Run</span></div>
<div class="cell" style="left:189px;top:421px;width:98px;height:20px;background:#dcffdc;"><span class="c">6</span></div>
<div class="cell" style="left:288px;top:421px;width:45px;height:20px;background:#dcffdc;"><span class="c">Zone 1</span></div>
<div class="cell" style="left:334px;top:421px;width:88px;height:20px;background:#dcffdc;"><span class="c">05 minutes</span></div>
<div class="cell" style="left:423px;top:421px;width:45px;height:20px;background:#dcffdc;"><span class="c">Zone 2</span></div>
<div class="cell" style="left:469px;top:421px;width:88px;height:20px;background:#dcffdc;"><span class="c">35 minutes</span></div>
<div class="cell" style="left:558px;top:421px;width:72px;height:20px;background:#dcffdc;"><span class="c">Zone 1</span></div>
<div class="cell" style="left:631px;top:421px;width:147px;height:20px;background:#dcffdc;"><span class="c">05 minutes</span></div>
<div class="cell" style="left:0px;top:442px;width:67px;height:20px;background:#ffffdc;"><span class="c c7 dg">2016-03-29</span></div>
<div class="cell" style="left:68px;top:442px;width:120px;height:20px;background:#ffffdc;"><span class="c c4">Tempo Run</span></div>
<div class="cell" style="left:189px;top:442px;width:98px;height:20px;background:#ffffdc;"><span class="c">5</span></div>
<div class="cell" style="left:288px;top:442px;width:45px;height:20px;background:#dcffdc;"><span class="c">Zone 1</span></div>
<div class="cell" style="left:334px;top:442px;width:88px;height:20px;background:#dcffdc;"><span class="c">05 minutes</span></div>
<div class="cell" style="left:423px;top:442px;width:45px;height:20px;background:#dcffdc;"><span class="c">Zone 2</span></div>
<div class="cell" style="left:469px;top:442px;width:88px;height:20px;background:#dcffdc;"><span class="c">05 minutes</span></div>
<div class="cell" style="left:558px;top:442px;width:72px;height:20px;background:#ffffdc;"><span class="c">Zone 3</span></div>
<div class="cell" style="left:631px;top:442px;width:147px;height:20px;background:#ffffdc;"><span class="c">28 minutes</span></div>
<div class="cell" style="left:0px;top:463px;width:67px;height:20px;background:#dcffdc;"><span class="c c7 dg">2016-03-30</span></div>
<div class="cell" style="left:68px;top:463px;width:120px;height:20px;background:#dcffdc;"><span class="c c4">Recovery Run</span></div>
<div class="cell" style="left:189px;top:463px;width:98px;height:20px;background:#dcffdc;"><span class="c">6</span></div>
<div class="cell" style="left:288px;top:463px;width:45px;height:20px;background:#dcffdc;"><span class="c">Zone 1</span></div>
<div class="cell" style="left:334px;top:463px;width:88px;height:20px;background:#dcffdc;"><span class="c">45 minutes</span></div>
<div class="cell" style="left:423px;top:463px;width:45px;height:20px;background:#fff;"></div>
<div class="cell" style="left:469px;top:463px;width:88px;height:20px;background:#fff;"></div>
<div class="cell" style="left:558px;top:463px;width:72px;height:20px;background:#fff;"></div>
<div class="cell" style="left:631px;top:463px;width:147px;height:20px;background:#fff;"></div>
<div class="cell" style="left:0px;top:484px;width:67px;height:20px;background:#dcffdc;"><span class="c c7 dg">2016-03-31</span></div>
<div class="cell" style="left:68px;top:484px;width:120px;height:20px;background:#dcffdc;"><span class="c c4">Foundation Run</span></div>
<div class="cell" style="left:189px;top:484px;width:98px;height:20px;background:#dcffdc;"><span class="c">6</span></div>
<div class="cell" style="left:288px;top:484px;width:45px;height:20px;background:#dcffdc;"><span class="c">Zone 1</span></div>
<div class="cell" style="left:334px;top:484px;width:88px;height:20px;background:#dcffdc;"><span class="c">05 minutes</span></div>
<div class="cell" style="left:423px;top:484px;width:45px;height:20px;background:#dcffdc;"><span class="c">Zone 2</span></div>
<div class="cell" style="left:469px;top:484px;width:88px;height:20px;background:#dcffdc;"><span class="c">35 minutes</span></div>
<div class="cell" style="left:558px;top:484px;width:72px;height:20px;background:#dcffdc;"><span class="c">Zone 1</span></div>
<div class="cell" style="left:631px;top:484px;width:147px;height:20px;background:#dcffdc;"><span class="c">05 minutes</span></div>
<div class="cell" style="left:0px;top:505px;width:67px;height:35px;background:#ffdcdc;"><span class="c c7 dg">2016-04-01</span></div>
<div class="cell" style="left:68px;top:505px;width:120px;height:35px;background:#ffdcdc;"><span class="c c4">Long Interval Run</span></div>
<div class="cell" style="left:189px;top:505px;width:98px;height:35px;background:#ffdcdc;"><span class="c">3</span></div>
<div class="cell" style="left:288px;top:505px;width:45px;height:35px;background:#dcffdc;"><span class="c">Zone 1</span></div>
<div class="cell" style="left:334px;top:505px;width:88px;height:35px;background:#dcffdc;"><span class="c">05 minutes</span></div>
<div class="cell" style="left:423px;top:505px;width:45px;height:35px;background:#dcffdc;"><span class="c">Zone 2</span></div>
<div class="cell" style="left:469px;top:505px;width:88px;height:35px;background:#dcffdc;"><span class="c">05 minutes</span></div>
<div class="cell" style="left:558px;top:505px;width:72px;height:35px;background:#ffdcdc;"><span class="c">3 x (Zone 4
Zone 1)</span></div>
<div class="cell" style="left:631px;top:505px;width:147px;height:35px;background:#ffdcdc;"><span class="c">3 x (05 minutes
03 minutes)</span></div>
<div class="cell" style="left:0px;top:541px;width:67px;height:20px;background:#dcffdc;"><span class="c c7 dg">2016-04-02</span></div>
<div class="cell" style="left:68px;top:541px;width:120px;height:20px;background:#dcffdc;"><span class="c c4">Recovery Run</span></div>
<div class="cell" style="left:189px;top:541px;width:98px;height:20px;background:#dcffdc;"><span class="c">6</span></div>
<div class="cell" style="left:288px;top:541px;width:45px;height:20px;background:#dcffdc;"><span class="c">Zone 1</span></div>
<div class="cell" style="left:334px;top:541px;width:88px;height:20px;background:#dcffdc;"><span class="c">45 minutes</span></div>
<div class="cell" style="left:423px;top:541px;width:45px;height:20px;background:#fff;"></div>
<div class="cell" style="left:469px;top:541px;width:88px;height:20px;background:#fff;"></div>
<div class="cell" style="left:558px;top:541px;width:72px;height:20px;background:#fff;"></div>
<div class="cell" style="left:631px;top:541px;width:147px;height:20px;background:#fff;"></div>
<div class="cell" style="left:0px;top:562px;width:67px;height:35px;background:#ffffdc;"><span class="c c7 dg">2016-04-03</span></div>
<div class="cell" style="left:68px;top:562px;width:120px;height:35px;background:#ffffdc;"><span class="c c4">Long Run Speed Play</span></div>
<div class="cell" style="left:189px;top:562px;width:98px;height:35px;background:#ffffdc;"><span class="c">2</span></div>
<div class="cell" style="left:288px;top:562px;width:45px;height:35px;background:#dcffdc;"><span class="c">Zone 1</span></div>
<div class="cell" style="left:334px;top:562px;width:88px;height:35px;background:#dcffdc;"><span class="c dg">0.80 km</span></div>
<div class="cell" style="left:423px;top:562px;width:45px;height:35px;background:#dcffdc;"><span class="c">Zone 2</span></div>
<div class="cell" style="left:469px;top:562px;width:88px;height:35px;background:#dcffdc;"><span class="c">2 km</span></div>
<div class="cell" style="left:558px;top:562px;width:72px;height:35px;background:#ffffdc;"><span class="c">10 x (Zone 3
Zone 1)</span></div>
<div class="cell" style="left:631px;top:562px;width:147px;height:35px;background:#ffffdc;"><span class="c dg">10 x (0.40 km
1.21 km)</span></div>
<div class="cell" style="left:0px;top:598px;width:67px;height:20px;background:#dcdcff;"><span class="c">Week 11</span></div>
<div class="cell" style="left:68px;top:598px;width:120px;height:20px;background:#dcdcff;"><span class="c c4">Peak phase</span></div>
<div class="cell" style="left:189px;top:598px;width:98px;height:20px;background:#dcdcff;"><span class="c dg">74.1 km, 06:09:07</span></div>
<div class="cell" style="left:288px;top:598px;width:45px;height:20px;background:#fff;"></div>
<div class="cell" style="left:334px;top:598px;width:88px;height:20px;background:#fff;"></div>
<div class="cell" style="left:423px;top:598px;width:45px;height:20px;background:#fff;"></div>
<div class="cell" style="left:469px;top:598px;width:88px;height:20px;background:#fff;"></div>
<div class="cell" style="left:558px;top:598px;width:72px;height:20px;background:#fff;"></div>
<div class="cell" style="left:631px;top:598px;width:147px;height:20px;background:#fff;"></div>
<div class="cell" style="left:0px;top:619px;width:67px;height:20px;background:#dcffdc;"><span class="c c7 dg">2016-04-04</span></div>
<div class="cell" style="left:68px;top:619px;width:120px;height:20px;background:#dcffdc;"><span class="c c4">Recovery Run</span></div>
<div class="cell" style="left:189px;top:619px;width:98px;height:20px;background:#dcffdc;"><span class="c">6</span></div>
<div class="cell" style="left:288px;top:619px;width:45px;height:20px;background:#dcffdc;"><span class="c">Zone 1</span></div>
<div class="cell" style="left:334px;top:619px;width:88px;height:20px;background:#dcffdc;"><span class="c">45 minutes</span></div>
<div class="cell" style="left:423px;top:619px;width:45px;height:20px;background:#fff;"></div>
<div class="cell" style="left:469px;top:619px;width:88px;height:20px;background:#fff;"></div>
<div class="cell" style="left:558px;top:619px;width:72px;height:20px;background:#fff;"></div>
<div class="cell" style="left:631px;top:619px;width:147px;height:20px;background:#fff;"></div>
<div class="cell" style="left:0px;top:640px;width:67px;height:35px;background:#ffffdc;"><span class="c c7 dg">2016-04-05</span></div>
<div class="cell" style="left:68px;top:640px;width:120px;height:35px;background:#ffffdc;"><span class="c c4">Cruise Interval Run</span></div>
<div class="cell" style="left:189px;top:640px;width:98px;height:35px;background:#ffffdc;"><span class="c">2</span></div>
<div class="cell" style="left:288px;top:640px;width:45px;height:35px;background:#dcffdc;"><span class="c">Zone 1</span></div>
<div class="cell" style="left:334px;top:640px;width:88px;height:35px;background:#dcffdc;"><span class="c">05 minutes</span></div>
<div class="cell" style="left:423px;top:640px;width:45px;height:35px;background:#dcffdc;"><span class="c">Zone 2</span></div>
<div class="cell" style="left:469px;top:640px;width:88px;height:35px;background:#dcffdc;"><span class="c">05 minutes</span></div>
<div class="cell" style="left:558px;top:640px;width:72px;height:35px;background:#ffffdc;"><span class="c">4 x (Zone 3
Zone 1)</span></div>
<div class="cell" style="left:631px;top:640px;width:147px;height:35px;background:#ffffdc;"><span class="c">4 x (08 minutes
03 minutes)</span></div>
<div class="cell" style="left:0px;top:676px;width:67px;height:20px;background:#dcffdc;"><span class="c c7 dg">2016-04-06</span></div>
<div class="cell" style="left:68px;top:676px;width:120px;height:20px;background:#dcffdc;"><span class="c c4">Recovery Run</span></div>
<div class="cell" style="left:189px;top:676px;width:98px;height:20px;background:#dcffdc;"><span class="c">6</span></div>
<div class="cell" style="left:288px;top:676px;width:45px;height:20px;background:#dcffdc;"><span class="c">Zone 1</span></div>
<div class="cell" style="left:334px;top:676px;width:88px;height:20px;background:#dcffdc;"><span class="c">45 minutes</span></div>
<div class="cell" style="left:423px;top:676px;width:45px;height:20px;background:#fff;"></div>
<div class="cell" style="left:469px;top:676px;width:88px;height:20px;background:#fff;"></div>
<div class="cell" style="left:558px;top:676px;width:72px;height:20px;background:#fff;"></div>
<div class="cell" style="left:631px;top:676px;width:147px;height:20px;background:#fff;"></div>
<div class="cell" style="left:0px;top:697px;width:67px;height:20px;background:#a0a0a0;color:#fff;"><span class="c c7 dg">2016-04-07</span></div>
<div class="cell" style="left:68px;top:697px;width:120px;height:20px;background:#a0a0a0;color:#fff;"><span class="c c4">Foundation Run</span></div>
<div class="cell" style="left:189px;top:697px;width:98px;height:20px;background:#a0a0a0;color:#fff;"><span class="c">6</span></div>
<div class="cell" style="left:288px;top:697px;width:45px;height:20px;background:#a0a0a0;color:#fff;"><span class="c">Zone 1</span></div>
<div class="cell" style="left:334px;top:697px;width:88px;height:20px;background:#a0a0a0;color:#fff;"><span class="c">05 minutes</span></div>
<div class="cell" style="left:423px;top:697px;width:45px;height:20px;background:#a0a0a0;color:#fff;"><span class="c">Zone 2</span></div>
<div class="cell" style="left:469px;top:697px;width:88px;height:20px;background:#a0a0a0;color:#fff;"><span class="c">35 minutes</span></div>
<div class="cell" style="left:558px;top:697px;width:72px;height:20px;background:#a0a0a0;color:#fff;"><span class="c">Zone 1</span></div>
<div class="cell" style="left:631px;top:697px;width:147px;height:20px;background:#a0a0a0;color:#fff;"><span class="c">05 minutes</span></div>
<div class="cell" style="left:0px;top:718px;width:67px;height:35px;background:#ffdcdc;"><span class="c c7 dg">2016-04-08</span></div>
<div class="cell" style="left:68px;top:718px;width:120px;height:35px;background:#ffdcdc;"><span class="c c4">Long Interval Run</span></div>
<div class="cell" style="left:189px;top:718px;width:98px;height:35px;background:#ffdcdc;"><span class="c">6</span></div>
<div class="cell" style="left:288px;top:718px;width:45px;height:35px;background:#dcffdc;"><span class="c">Zone 1</span></div>
<div class="cell" style="left:334px;top:718px;width:88px;height:35px;background:#dcffdc;"><span class="c">05 minutes</span></div>
<div class="cell" style="left:423px;top:718px;width:45px;height:35px;background:#dcffdc;"><span class="c">Zone 2</span></div>
<div class="cell" style="left:469px;top:718px;width:88px;height:35px;background:#dcffdc;"><span class="c">05 minutes</span></div>
<div class="cell" style="left:558px;top:718px;width:72px;height:35px;background:#ffdcdc;"><span class="c">4 x (Zone 4
Zone 1)</span></div>
<div class="cell" style="left:631px;top:718px;width:147px;height:35px;background:#ffdcdc;"><span class="c">4 x (05 minutes
03 minutes)</span></div>
<div class="cell" style="left:0px;top:754px;width:67px;height:20px;background:#dcffdc;"><span class="c c7 dg">2016-04-09</span></div>
<div class="cell" style="left:68px;top:754px;width:120px;height:20px;background:#dcffdc;"><span class="c c4">Recovery Run</span></div>
<div class="cell" style="left:189px;top:754px;width:98px;height:20px;background:#dcffdc;"><span class="c">6</span></div>
<div class="cell" style="left:288px;top:754px;width:45px;height:20px;background:#dcffdc;"><span class="c">Zone 1</span></div>
<div class="cell" style="left:334px;top:754px;width:88px;height:20px;background:#dcffdc;"><span class="c">45 minutes</span></div>
<div class="cell" style="left:423px;top:754px;width:45px;height:20px;background:#fff;"></div>
<div class="cell" style="left:469px;top:754px;width:88px;height:20px;background:#fff;"></div>
<div class="cell" style="left:558px;top:754px;width:72px;height:20px;background:#fff;"></div>
<div class="cell" style="left:631px;top:754px;width:147px;height:20px;background:#fff;"></div>
<div class="cell hc" style="left:0px;top:0px;width:67px;height:30px;line-height:30px;">Date</div>
<div class="cell hc" style="left:68px;top:0px;width:120px;height:30px;line-height:30px;">Training</div>
<div class="cell hc" style="left:189px;top:0px;width:98px;height:30px;line-height:30px;">Level</div>
<div class="cell hc" style="left:288px;top:0px;width:45px;height:30px;line-height:30px;">Part 1</div>
<div class="cell hc" style="left:334px;top:0px;width:88px;height:30px;line-height:30px;">Time/distance</div>
<div class="cell hc" style="left:423px;top:0px;width:45px;height:30px;line-height:30px;">Part 2</div>
<div class="cell hc" style="left:469px;top:0px;width:88px;height:30px;line-height:30px;">Time/distance</div>
<div class="cell hc" style="left:558px;top:0px;width:72px;height:30px;line-height:30px;">Part 3</div>
<div class="cell hc" style="left:631px;top:0px;width:147px;height:30px;line-height:30px;">Time/distance</div>
</div>
<div style="left:1322px;top:243px;width:17px;height:756px;background:#f0f0f0;"></div>
<div style="left:1323px;top:596px;width:15px;height:190px;background:#cdcdcd;"></div>
<svg class="ab" style="left:1322px;top:243px" width="17" height="17" viewBox="0 0 17 17"><path d="M5 10.500L8.500 6.500L12 10.500" fill="none" stroke="#484848" stroke-width="2"/></svg>
<svg class="ab" style="left:1322px;top:982px" width="17" height="17" viewBox="0 0 17 17"><path d="M5 6.500L8.500 10.500L12 6.500" fill="none" stroke="#484848" stroke-width="2"/></svg>
<div style="left:581px;top:999px;width:741px;height:17px;background:#f0f0f0;"></div>
<div style="left:598px;top:1000px;width:253px;height:15px;background:#cdcdcd;"></div>
<svg class="ab" style="left:581px;top:999px" width="17" height="17" viewBox="0 0 17 17"><path d="M10.500 5L6.500 8.500L10.500 12" fill="none" stroke="#484848" stroke-width="2"/></svg>
<svg class="ab" style="left:1305px;top:999px" width="17" height="17" viewBox="0 0 17 17"><path d="M6.500 5L10.500 8.500L6.500 12" fill="none" stroke="#484848" stroke-width="2"/></svg>
<div style="left:1322px;top:999px;width:17px;height:17px;background:#f0f0f0;"></div>
<div style="left:1344px;top:43px;width:576px;height:365px;background:#fff;box-shadow:inset 0 0 0 1px #a8a8a8;"></div>
<div style="left:1345px;top:43px;width:574px;height:18px;background:linear-gradient(#a8a8a8 0,#b4b4b4 6%,#c4c4c4 35%,#d2d2d2 70%,#d6d6d6 100%);"></div>
<div class="ab" style="left:1352px;top:43px;width:22px;height:18px;overflow:hidden"><svg class="run" viewBox="0 0 22 18" width="22" height="18"><defs><linearGradient id="rg" x1="0" y1="0" x2="0" y2="1"><stop offset="0" stop-color="#ac0606"/><stop offset="1" stop-color="#62000c"/></linearGradient></defs><rect x="1.5" y="-1" width="19" height="1" rx=".5" fill="#d04040" fill-opacity=".8"/><rect y="1" width="22" height="17" rx="1.5" fill="url(#rg)"/><g transform="translate(0,1)" fill="none" stroke="#fff" stroke-linecap="round" stroke-linejoin="round"><circle cx="12.8" cy="2.1" r="1.15" fill="#fff" stroke="none"/><path d="M10.8 3.7L14 3.7L13.4 8.6L13.5 10.5L11.3 10.5L11.3 8.6Z" fill="#fff" stroke="none"/><path d="M10.9 4L9.3 5.4L9.8 7.3" stroke-width="1"/><path d="M13.8 4.1L14.6 5.7L16 5.5" stroke-width="1"/><path d="M11.9 10.3L9 11.2L6.1 10.3L5.4 11.3" stroke-width="1.25"/><path d="M12.8 10.3L14 12.9L14.8 15.2L16.6 15.5" stroke-width="1.25"/></g></svg></div>
<div class="pt" style="left:1383px;top:43px;">Training types</div>
<svg class="ab" style="left:1890px;top:47px" width="26" height="10" viewBox="0 0 26 10"><rect x="1.5" y="0.5" width="8" height="8" fill="none" stroke="#111" stroke-width="1"/><path d="M1 2.5H10" stroke="#111" stroke-width="1"/><path d="M16.5 1.5L23.5 8M23.5 1.5L16.5 8" stroke="#111" stroke-width="1.5"/></svg>
<div style="left:1345px;top:61px;width:557px;height:1px;background:#a0a0a0;"></div>
<div style="left:1345px;top:61px;width:1px;height:346px;background:#a0a0a0;"></div>
<div style="left:581px;top:61px;width:741px;height:1px;background:#a0a0a0;"></div>
<div style="left:581px;top:61px;width:1px;height:158px;background:#a8a8a8;"></div>
<div style="left:581px;top:242px;width:1px;height:774px;background:#a8a8a8;"></div>
<div style="left:581px;top:242px;width:741px;height:1px;background:#a0a0a0;"></div>
<div style="left:1346px;top:62px;width:556px;height:345px;overflow:hidden;background:#fff" class="tt">
<div style="left:0px;top:0px;width:556px;height:31px;background:#f0f0f0;"></div>
<div class="cell hc" style="left:0px;top:0px;width:190px;height:30px;line-height:30px;"></div>
<div class="cell hc" style="left:191px;top:0px;width:352px;height:30px;line-height:30px;">Description</div>
<div class="cell hc" style="left:0px;top:31px;width:190px;height:20px;line-height:22px;">Rest</div>
<div class="cell" style="left:191px;top:31px;width:352px;height:20px;background:#dcffdc;"><span class="c">No activity</span></div>
<div class="cell hc" style="left:0px;top:52px;width:190px;height:35px;line-height:37px;">Recovery Run</div>
<div class="cell" style="left:191px;top:52px;width:352px;height:35px;background:#dcffdc;"><span class="c">Zone 1 only. The day after challenging workout.
An alternative to a day off. Increases running volume.</span></div>
<div class="cell hc" style="left:0px;top:88px;width:190px;height:35px;line-height:37px;">Foundation Run</div>
<div class="cell" style="left:191px;top:88px;width:352px;height:35px;background:#dcffdc;"><span class="c">The bread and butter of 80/20 training.
Ensures that you do enough low intensity running.</span></div>
<div class="cell hc" style="left:0px;top:124px;width:190px;height:35px;line-height:37px;">Long Run</div>
<div class="cell" style="left:191px;top:124px;width:352px;height:35px;background:#dcffdc;"><span class="c">Extended foundation run. Measured in distance to enforce
endurance for the entire race distance regardless of training level.</span></div>
<div class="cell hc" style="left:0px;top:160px;width:190px;height:35px;line-height:37px;">Fast Finish Run</div>
<div class="cell" style="left:191px;top:160px;width:352px;height:35px;background:#ffffdc;"><span class="c">A relatively short Zone 3 at the end of a foundation
run. Provides some quality during base and recovery training.</span></div>
<div class="cell hc" style="left:0px;top:196px;width:190px;height:35px;line-height:37px;">Tempo Run</div>
<div class="cell" style="left:191px;top:196px;width:352px;height:35px;background:#ffffdc;"><span class="c">Zone 3 with warm up and cool down.
Improves sustained aggressive speed.</span></div>
<div class="cell hc" style="left:0px;top:232px;width:190px;height:35px;line-height:37px;">Cruise Interval Run</div>
<div class="cell" style="left:191px;top:232px;width:352px;height:35px;background:#ffffdc;"><span class="c">Multiple long intervals with Zone 1 recoveries.
Allows more total work than tempo runs.</span></div>
<div class="cell hc" style="left:0px;top:268px;width:190px;height:35px;line-height:37px;">Long Run Speed Play</div>
<div class="cell" style="left:191px;top:268px;width:352px;height:35px;background:#ffffdc;"><span class="c">Short bursts in Zone 3 sprinkled in long run.
Done late in training cycle to increase fatigue resistance.</span></div>
<div class="cell hc" style="left:0px;top:304px;width:190px;height:35px;line-height:37px;">Long Run Fast Finish</div>
<div class="cell" style="left:191px;top:304px;width:352px;height:35px;background:#ffffdc;"><span class="c">Fast finish at end of long run.
Done late in training cycle to increase fatigue resistance.</span></div>
<div class="cell hc" style="left:0px;top:340px;width:190px;height:35px;line-height:37px;">Short Interval Run</div>
<div class="cell" style="left:191px;top:340px;width:352px;height:35px;background:#ffdcdc;"></div>
</div>
<div style="left:1902px;top:62px;width:17px;height:345px;background:#f0f0f0;"></div>
<div style="left:1903px;top:79px;width:15px;height:178px;background:#cdcdcd;"></div>
<svg class="ab" style="left:1902px;top:62px" width="17" height="17" viewBox="0 0 17 17"><path d="M5 10.500L8.500 6.500L12 10.500" fill="none" stroke="#484848" stroke-width="2"/></svg>
<svg class="ab" style="left:1902px;top:390px" width="17" height="17" viewBox="0 0 17 17"><path d="M5 6.500L8.500 10.500L12 6.500" fill="none" stroke="#484848" stroke-width="2"/></svg>
<div style="left:1344px;top:412px;width:576px;height:208px;background:#fff;box-shadow:inset 0 0 0 1px #a8a8a8;"></div>
<div style="left:1345px;top:412px;width:574px;height:18px;background:linear-gradient(#a8a8a8 0,#b4b4b4 6%,#c4c4c4 35%,#d2d2d2 70%,#d6d6d6 100%);"></div>
<div class="ab" style="left:1352px;top:412px;width:22px;height:18px;overflow:visible"><svg class="run" viewBox="0 0 22 18" width="22" height="18"><defs><linearGradient id="rg" x1="0" y1="0" x2="0" y2="1"><stop offset="0" stop-color="#ac0606"/><stop offset="1" stop-color="#62000c"/></linearGradient></defs><rect x="1.5" y="-1" width="19" height="1" rx=".5" fill="#d04040" fill-opacity=".8"/><rect y="1" width="22" height="17" rx="1.5" fill="url(#rg)"/><g transform="translate(0,1)" fill="none" stroke="#fff" stroke-linecap="round" stroke-linejoin="round"><circle cx="12.8" cy="2.1" r="1.15" fill="#fff" stroke="none"/><path d="M10.8 3.7L14 3.7L13.4 8.6L13.5 10.5L11.3 10.5L11.3 8.6Z" fill="#fff" stroke="none"/><path d="M10.9 4L9.3 5.4L9.8 7.3" stroke-width="1"/><path d="M13.8 4.1L14.6 5.7L16 5.5" stroke-width="1"/><path d="M11.9 10.3L9 11.2L6.1 10.3L5.4 11.3" stroke-width="1.25"/><path d="M12.8 10.3L14 12.9L14.8 15.2L16.6 15.5" stroke-width="1.25"/></g></svg></div>
<div class="pt" style="left:1383px;top:412px;">Training Thursday 2016-04-07</div>
<svg class="ab" style="left:1890px;top:416px" width="26" height="10" viewBox="0 0 26 10"><rect x="1.5" y="0.5" width="8" height="8" fill="none" stroke="#111" stroke-width="1"/><path d="M1 2.5H10" stroke="#111" stroke-width="1"/><path d="M16.5 1.5L23.5 8M23.5 1.5L16.5 8" stroke="#111" stroke-width="1.5"/></svg>
<div style="left:1345px;top:430px;width:1px;height:189px;background:#a0a0a0;"></div>
<div style="left:1346px;top:430px;width:573px;height:189px;overflow:hidden;background:#fff" class="zt">
<div class="cell hc" style="left:0px;top:0px;width:80px;height:20px;line-height:22px;">Date</div>
<div class="cell hc" style="left:0px;top:21px;width:80px;height:35px;line-height:37px;">Training</div>
<div class="cell hc" style="left:0px;top:57px;width:80px;height:20px;line-height:22px;">Level</div>
<div class="cell hc" style="left:0px;top:78px;width:80px;height:20px;line-height:22px;">Total time</div>
<div class="cell hc" style="left:0px;top:99px;width:80px;height:20px;line-height:22px;">Total distance</div>
<div class="cell hc" style="left:0px;top:120px;width:80px;height:20px;line-height:22px;">Zone 1</div>
<div class="cell hc" style="left:0px;top:141px;width:80px;height:20px;line-height:22px;">Zone 2</div>
<div class="cell hc" style="left:0px;top:162px;width:80px;height:20px;line-height:22px;">Zone 1</div>
<div class="cell" style="left:81px;top:0px;width:400px;height:20px;background:#dcffdc;"><span class="c">Thursday 2016-04-07</span></div>
<div class="cell" style="left:81px;top:21px;width:94px;height:35px;background:#dcffdc;"><span class="c">Foundation Run</span></div>
<div class="cell" style="left:176px;top:21px;width:305px;height:35px;background:#dcffdc;"><span class="c">The bread and butter of 80/20 training.
Ensures that you do enough low intensity running.</span></div>
<div class="cell" style="left:81px;top:57px;width:400px;height:20px;background:#dcffdc;"><span class="c">6</span></div>
<div class="cell" style="left:81px;top:78px;width:400px;height:20px;background:#dcffdc;"><span class="c dg">00:45:00</span></div>
<div class="cell" style="left:81px;top:99px;width:400px;height:20px;background:#dcffdc;"><span class="c dg">8.9 km</span></div>
<div class="cell" style="left:81px;top:120px;width:94px;height:20px;background:#dcffdc;"><span class="c">05 minutes</span></div>
<div class="cell" style="left:176px;top:120px;width:75px;height:20px;background:#dcffdc;"><span class="c dg">124 (75%)</span></div>
<div class="cell" style="left:252px;top:120px;width:75px;height:20px;background:#dcffdc;"><span class="c dg">132 (80%)</span></div>
<div class="cell" style="left:328px;top:120px;width:76px;height:20px;background:#dcffdc;"><span class="c">6:00 min/km</span></div>
<div class="cell" style="left:405px;top:120px;width:76px;height:20px;background:#dcffdc;"><span class="c">5:00 min/km</span></div>
<div class="cell" style="left:81px;top:141px;width:94px;height:20px;background:#dcffdc;"><span class="c">35 minutes</span></div>
<div class="cell" style="left:176px;top:141px;width:75px;height:20px;background:#dcffdc;"><span class="c dg">134 (81%)</span></div>
<div class="cell" style="left:252px;top:141px;width:75px;height:20px;background:#dcffdc;"><span class="c dg">147 (89%)</span></div>
<div class="cell" style="left:328px;top:141px;width:76px;height:20px;background:#dcffdc;"><span class="c">5:10 min/km</span></div>
<div class="cell" style="left:405px;top:141px;width:76px;height:20px;background:#dcffdc;"><span class="c">4:40 min/km</span></div>
<div class="cell" style="left:81px;top:162px;width:94px;height:20px;background:#dcffdc;"><span class="c">05 minutes</span></div>
<div class="cell" style="left:176px;top:162px;width:75px;height:20px;background:#dcffdc;"><span class="c dg">124 (75%)</span></div>
<div class="cell" style="left:252px;top:162px;width:75px;height:20px;background:#dcffdc;"><span class="c dg">132 (80%)</span></div>
<div class="cell" style="left:328px;top:162px;width:76px;height:20px;background:#dcffdc;"><span class="c">6:00 min/km</span></div>
<div class="cell" style="left:405px;top:162px;width:76px;height:20px;background:#dcffdc;"><span class="c">5:00 min/km</span></div>
<div class="cell hc" style="left:0px;top:183px;width:80px;height:20px;line-height:22px;"></div>
</div>
<div style="left:1344px;top:624px;width:576px;height:393px;background:#f0f0f0;box-shadow:inset 0 0 0 1px #a8a8a8;"></div>
<div style="left:1345px;top:624px;width:574px;height:18px;background:linear-gradient(#a8a8a8 0,#b4b4b4 6%,#c4c4c4 35%,#d2d2d2 70%,#d6d6d6 100%);"></div>
<div class="ab" style="left:1352px;top:624px;width:22px;height:18px;overflow:visible"><svg class="run" viewBox="0 0 22 18" width="22" height="18"><defs><linearGradient id="rg" x1="0" y1="0" x2="0" y2="1"><stop offset="0" stop-color="#ac0606"/><stop offset="1" stop-color="#62000c"/></linearGradient></defs><rect x="1.5" y="-1" width="19" height="1" rx=".5" fill="#d04040" fill-opacity=".8"/><rect y="1" width="22" height="17" rx="1.5" fill="url(#rg)"/><g transform="translate(0,1)" fill="none" stroke="#fff" stroke-linecap="round" stroke-linejoin="round"><circle cx="12.8" cy="2.1" r="1.15" fill="#fff" stroke="none"/><path d="M10.8 3.7L14 3.7L13.4 8.6L13.5 10.5L11.3 10.5L11.3 8.6Z" fill="#fff" stroke="none"/><path d="M10.9 4L9.3 5.4L9.8 7.3" stroke-width="1"/><path d="M13.8 4.1L14.6 5.7L16 5.5" stroke-width="1"/><path d="M11.9 10.3L9 11.2L6.1 10.3L5.4 11.3" stroke-width="1.25"/><path d="M12.8 10.3L14 12.9L14.8 15.2L16.6 15.5" stroke-width="1.25"/></g></svg></div>
<div class="pt" style="left:1383px;top:624px;">Calculator</div>
<svg class="ab" style="left:1890px;top:628px" width="26" height="10" viewBox="0 0 26 10"><rect x="1.5" y="0.5" width="8" height="8" fill="none" stroke="#111" stroke-width="1"/><path d="M1 2.5H10" stroke="#111" stroke-width="1"/><path d="M16.5 1.5L23.5 8M23.5 1.5L16.5 8" stroke="#111" stroke-width="1.5"/></svg>
<div style="left:1345px;top:642px;width:1px;height:374px;background:#a0a0a0;"></div>
<div style="left:1345px;top:642px;width:574px;height:1px;background:#a0a0a0;"></div>
<div style="left:1346px;top:664px;width:573px;height:1px;background:#a0a0a0;"></div>
<svg class="ab" style="left:1346px;top:645px" width="80" height="21" viewBox="0 0 80 21"><path d="M1.5 19.5 L17.5 2.5 Q18.5 1.5 20 1.5 H73 Q75.5 1.5 75.5 4 V20" fill="#fff" stroke="#8c8c8c" stroke-width="1"/><path d="M61 6L69.500 14M69.500 6L61 14" stroke="#111" stroke-width="1.400"/></svg>
<div class="t" style="left:1367px;top:648px;font-weight:bold;letter-spacing:-0.3px">Speed</div>
<div style="left:1347px;top:672px;width:571px;height:1px;background:#dcdcdc;"></div>
<div style="left:1347px;top:673px;width:571px;height:1px;background:#fff;"></div>
<div class="t" style="left:1353px;top:665px;background:#f0f0f0;padding:0 2px;letter-spacing:0.2px">Minutes per km [min/km]</div>
<div class="spin" style="left:1351px;top:685px;width:114px;height:23px;line-height:20px;">5</div>
<div class="sb" style="left:1467px;top:686px;width:15px;height:10px;"></div>
<div class="sb" style="left:1467px;top:696px;width:15px;height:11px;"></div>
<svg class="ab" style="left:1467px;top:686px" width="15" height="21"><path d="M4.5 6.5h6l-3 -3.5z M4.5 14.0h6l-3 3.5z" fill="#111"/></svg>
<div class="t" style="left:1483px;top:685px;">min</div>
<div class="spin" style="left:1507px;top:685px;width:114px;height:23px;line-height:20px;">0</div>
<div class="sb" style="left:1623px;top:686px;width:15px;height:10px;"></div>
<div class="sb" style="left:1623px;top:696px;width:15px;height:11px;"></div>
<svg class="ab" style="left:1623px;top:686px" width="15" height="21"><path d="M4.5 6.5h6l-3 -3.5z M4.5 14.0h6l-3 3.5z" fill="#111"/></svg>
<div class="t" style="left:1639px;top:685px;">sec</div>
<div style="left:1347px;top:711px;width:571px;height:1px;background:#dcdcdc;"></div>
<div style="left:1347px;top:720px;width:571px;height:1px;background:#dcdcdc;"></div>
<div style="left:1347px;top:721px;width:571px;height:1px;background:#fff;"></div>
<div class="t" style="left:1353px;top:713px;background:#f0f0f0;padding:0 2px;letter-spacing:0.2px">Minutes per mile [min/mile]</div>
<div class="spin" style="left:1351px;top:733px;width:114px;height:23px;line-height:20px;">8</div>
<div class="sb" style="left:1467px;top:734px;width:15px;height:10px;"></div>
<div class="sb" style="left:1467px;top:744px;width:15px;height:11px;"></div>
<svg class="ab" style="left:1467px;top:734px" width="15" height="21"><path d="M4.5 6.5h6l-3 -3.5z M4.5 14.0h6l-3 3.5z" fill="#111"/></svg>
<div class="t" style="left:1483px;top:733px;">min</div>
<div class="spin" style="left:1507px;top:733px;width:114px;height:23px;line-height:20px;">3</div>
<div class="sb" style="left:1623px;top:734px;width:15px;height:10px;"></div>
<div class="sb" style="left:1623px;top:744px;width:15px;height:11px;"></div>
<svg class="ab" style="left:1623px;top:734px" width="15" height="21"><path d="M4.5 6.5h6l-3 -3.5z M4.5 14.0h6l-3 3.5z" fill="#111"/></svg>
<div class="t" style="left:1639px;top:733px;">sec</div>
<div style="left:1347px;top:759px;width:571px;height:1px;background:#dcdcdc;"></div>
<div style="left:1347px;top:768px;width:571px;height:1px;background:#dcdcdc;"></div>
<div style="left:1347px;top:769px;width:571px;height:1px;background:#fff;"></div>
<div class="t" style="left:1353px;top:761px;background:#f0f0f0;padding:0 2px;letter-spacing:0.2px">Kilometer per hour [km/h]</div>
<div class="spin" style="left:1351px;top:781px;width:70px;height:23px;line-height:21px;text-align:left;padding-left:5px;">12.00</div>
<div style="left:1347px;top:807px;width:571px;height:1px;background:#dcdcdc;"></div>
<div style="left:1351px;top:814px;width:545px;height:196px;overflow:hidden;background:#fff" class="zt">
<div style="left:0px;top:0px;width:545px;height:32px;background:#f0f0f0;"></div>
<div style="left:0px;top:0px;width:1px;height:196px;background:#a0a0a0;"></div>
<div style="left:0px;top:0px;width:147px;height:1px;background:#a0a0a0;"></div>
<div class="cell hc" style="left:1px;top:1px;width:80px;height:30px;line-height:30px;"></div>
<div class="cell hc" style="left:82px;top:1px;width:63px;height:30px;line-height:30px;">Time</div>
<div class="cell hc" style="left:1px;top:32px;width:80px;height:20px;line-height:22px;">100m</div>
<div class="cell" style="left:82px;top:32px;width:63px;height:20px;background:#fff;"><span class="c dg">00:00:30</span></div>
<div class="cell hc" style="left:1px;top:53px;width:80px;height:20px;line-height:22px;">200m</div>
<div class="cell" style="left:82px;top:53px;width:63px;height:20px;background:#fff;"><span class="c dg">00:01:00</span></div>
<div class="cell hc" style="left:1px;top:74px;width:80px;height:20px;line-height:22px;">400m</div>
<div class="cell" style="left:82px;top:74px;width:63px;height:20px;background:#fff;"><span class="c dg">00:02:00</span></div>
<div class="cell hc" style="left:1px;top:95px;width:80px;height:20px;line-height:22px;">800m</div>
<div class="cell" style="left:82px;top:95px;width:63px;height:20px;background:#fff;"><span class="c dg">00:04:00</span></div>
<div class="cell hc" style="left:1px;top:116px;width:80px;height:20px;line-height:22px;">1500m</div>
<div class="cell" style="left:82px;top:116px;width:63px;height:20px;background:#fff;"><span class="c dg">00:07:30</span></div>
<div class="cell hc" style="left:1px;top:137px;width:80px;height:20px;line-height:22px;">3000m</div>
<div class="cell" style="left:82px;top:137px;width:63px;height:20px;background:#fff;"><span class="c dg">00:15:00</span></div>
<div class="cell hc" style="left:1px;top:158px;width:80px;height:20px;line-height:22px;">5000m</div>
<div class="cell" style="left:82px;top:158px;width:63px;height:20px;background:#fff;"><span class="c dg">00:25:00</span></div>
<div class="cell hc" style="left:1px;top:179px;width:80px;height:20px;line-height:22px;">10000m</div>
<div class="cell" style="left:82px;top:179px;width:63px;height:20px;background:#fff;"><span class="c dg">00:50:00</span></div>
<div class="cell hc" style="left:1px;top:200px;width:80px;height:20px;line-height:22px;"></div>
<div class="cell" style="left:82px;top:200px;width:63px;height:20px;background:#fff;"></div>
</div>
<div style="left:1896px;top:814px;width:17px;height:196px;background:#f0f0f0;"></div>
<div style="left:1897px;top:831px;width:15px;height:116px;background:#cdcdcd;"></div>
<svg class="ab" style="left:1896px;top:814px" width="17" height="17" viewBox="0 0 17 17"><path d="M5 10.500L8.500 6.500L12 10.500" fill="none" stroke="#484848" stroke-width="2"/></svg>
<svg class="ab" style="left:1896px;top:993px" width="17" height="17" viewBox="0 0 17 17"><path d="M5 6.500L8.500 10.500L12 6.500" fill="none" stroke="#484848" stroke-width="2"/></svg>
<div style="left:0px;top:392px;width:576px;height:277px;background:#fff;box-shadow:inset 0 0 0 1px #a8a8a8;"></div>
<div style="left:1px;top:392px;width:574px;height:18px;background:linear-gradient(#a8a8a8 0,#b4b4b4 6%,#c4c4c4 35%,#d2d2d2 70%,#d6d6d6 100%);"></div>
<div class="ab" style="left:8px;top:392px;width:22px;height:18px;overflow:visible"><svg class="run" viewBox="0 0 22 18" width="22" height="18"><defs><linearGradient id="rg" x1="0" y1="0" x2="0" y2="1"><stop offset="0" stop-color="#ac0606"/><stop offset="1" stop-color="#62000c"/></linearGradient></defs><rect x="1.5" y="-1" width="19" height="1" rx=".5" fill="#d04040" fill-opacity=".8"/><rect y="1" width="22" height="17" rx="1.5" fill="url(#rg)"/><g transform="translate(0,1)" fill="none" stroke="#fff" stroke-linecap="round" stroke-linejoin="round"><circle cx="12.8" cy="2.1" r="1.15" fill="#fff" stroke="none"/><path d="M10.8 3.7L14 3.7L13.4 8.6L13.5 10.5L11.3 10.5L11.3 8.6Z" fill="#fff" stroke="none"/><path d="M10.9 4L9.3 5.4L9.8 7.3" stroke-width="1"/><path d="M13.8 4.1L14.6 5.7L16 5.5" stroke-width="1"/><path d="M11.9 10.3L9 11.2L6.1 10.3L5.4 11.3" stroke-width="1.25"/><path d="M12.8 10.3L14 12.9L14.8 15.2L16.6 15.5" stroke-width="1.25"/></g></svg></div>
<div class="pt" style="left:39px;top:392px;">Help</div>
<svg class="ab" style="left:546px;top:396px" width="26" height="10" viewBox="0 0 26 10"><rect x="1.5" y="0.5" width="8" height="8" fill="none" stroke="#111" stroke-width="1"/><path d="M1 2.5H10" stroke="#111" stroke-width="1"/><path d="M16.5 1.5L23.5 8M23.5 1.5L16.5 8" stroke="#111" stroke-width="1.5"/></svg>
<div style="left:1px;top:410px;width:574px;height:34px;background:#f0f0f0;"></div>
<svg class="ab" style="left:0;top:410px" width="290" height="34" viewBox="0 0 290 34"><defs><linearGradient id="gg" x1="0" y1="0" x2="0" y2="1"><stop offset="0" stop-color="#9ad64a"/><stop offset="1" stop-color="#4c9c10"/></linearGradient></defs><rect x="9.5" y="8.5" width="13" height="13" fill="#fff" stroke="#000"/><path d="M13.5 8.5V21.5" stroke="#000"/><path d="M15 11.5h6M15 14.5h6M15 17.5h6M15 19.5h6" stroke="#222"/><path d="M10.5 11.5h2M10.5 15h2M10.5 18.5h2" stroke="#1030e0" stroke-width="1.6"/><path d="M46.5 24.5L55.5 16.5V21H62.5V28H55.5V32.5Z" transform="translate(0,-9.5)" fill="url(#gg)" stroke="#3f8a10" stroke-width="1"/><path d="M94.5 24.5L85.5 16.5V21H78.5V28H85.5V32.5Z" transform="translate(0,-9.5)" fill="url(#gg)" stroke="#3f8a10" stroke-width="1"/><path d="M118.5 14.5L124.5 8.5L130.5 14.5H127.5V16.5H130.5V20.5H121.5V14.5Z" fill="#fff" stroke="#000" stroke-width="1.2"/><path d="M156 7.5L164 16.5H159.5V23.5H152.5V16.5H148Z" fill="url(#gg)" stroke="#3f8a10"/><path d="M187 22.5L195 13.5H190.5V6.5H183.5V13.5H179Z" fill="url(#gg)" stroke="#3f8a10"/><rect x="220.5" y="5.500" width="11" height="9" fill="#fafafa" stroke="#b8b8b8"/><path d="M226 7.500l3 3h-2v2.500h-2v-2.500h-2z" fill="#999"/><rect x="216.500" y="13.500" width="19" height="9" rx="2.500" fill="#cfcfcf" stroke="#9a9a9a"/><rect x="218.500" y="18.500" width="15" height="3" fill="#f4f4f4" stroke="#aaa" stroke-width=".6"/></svg>
<div class="t" style="left:258px;top:413px;font-family:'Liberation Serif',serif;font-weight:bold;font-size:19px;letter-spacing:0;line-height:24px">A</div>
<div style="left:1px;top:444px;width:556px;height:206px;overflow:hidden;background:#fff" class="hp">
<div class="t" style="left:13px;top:3px;font-weight:bold;font-size:20px;line-height:26px;letter-spacing:-0.15px">Use calendar in other apps.</div>
<div class="t" style="left:12px;top:46px;">Your training program can be exported to a *.csv file by selecting <i>File-&gt;Save training calendar...</i> in</div>
<div class="t" style="left:12px;top:61px;">the menu. This file can be imported in e.g. Google calendar so that you have your training plan</div>
<div class="t" style="left:12px;top:76px;">available wherever you are. Follow these steps to import the *.csv file to Google Calendar:</div>
<svg class="ab" style="left:37px;top:100px" width="6" height="6"><path d="M3 0L6 3L3 6L0 3Z" fill="#000"/></svg>
<svg class="ab" style="left:37px;top:120px" width="6" height="6"><path d="M3 0L6 3L3 6L0 3Z" fill="#000"/></svg>
<div class="t" style="left:48px;top:94px;">Open Google Calendar on a computer.</div>
<div class="t" style="left:48px;top:114px;">Click on the arrow to the right of &quot;My Calendars&quot; and select &quot;Create New Calendar&quot;.</div>
<svg class="ab" style="left:58px;top:162px" width="10" height="6"><path d="M0.5 0.5h8l-4 4.500z" fill="#555"/></svg>
<div class="t" style="left:71px;top:157px;font-size:13px;color:#333;letter-spacing:0;line-height:18px">My calendars</div>
<div style="left:204px;top:158px;width:13px;height:12px;background:linear-gradient(#fafafa,#e4e4e4);border:1px solid #8a8a8a;"></div>
<svg class="ab" style="left:207px;top:162px" width="8" height="5"><path d="M0 0h7l-3.500 4.500z" fill="#222"/></svg>
<div style="left:226px;top:146px;width:222px;height:26px;border:1px solid #ddd;border-bottom:none;background:#fff;"></div>
<div style="left:285px;top:146px;width:1px;height:26px;background:#ddd;"></div>
<div style="left:448px;top:146px;width:17px;height:60px;background:#f2f2f2;border-top:1px solid #ddd;"></div>
<div class="t" style="left:252px;top:147px;color:#555;letter-spacing:0;line-height:16px">08:00</div>
<div style="left:287px;top:166px;width:161px;height:1px;border-top:1px dotted #ccc;"></div>
<div style="left:204px;top:172px;width:253px;height:34px;background:#f0f0f0;border:1px solid #ccc;border-bottom:none;box-shadow:0 1px 3px rgba(0,0,0,.2);"></div>
<div style="left:205px;top:173px;width:251px;height:5px;background:#fff;"></div>
<div class="t" style="left:234px;top:184px;font-size:13px;color:#333;letter-spacing:-0.1px;line-height:18px">Create new calendar</div>
<div style="left:71px;top:190px;width:13px;height:13px;background:#d06b64;"></div>
<div class="t" style="left:88px;top:188px;font-size:13px;color:#333;letter-spacing:-0.3px;line-height:18px">Håkan Wiman</div>
<svg class="ab" style="left:253px;top:193px" width="16" height="14" viewBox="0 0 16 14"><path d="M3.500 0.500h2v6l1 0v-2h2v2h1v-1.500h2v2h1v-1h1.500v8h-9.500l-3.500-5.500l1.500-1l2 2z" fill="#fff" stroke="#000" stroke-width="1"/></svg>
</div>
<div style="left:557px;top:444px;width:17px;height:206px;background:#f0f0f0;"></div>
<div style="left:558px;top:468px;width:15px;height:18px;background:#cdcdcd;"></div>
<svg class="ab" style="left:557px;top:444px" width="17" height="17" viewBox="0 0 17 17"><path d="M5 10.500L8.500 6.500L12 10.500" fill="none" stroke="#484848" stroke-width="2"/></svg>
<svg class="ab" style="left:557px;top:633px" width="17" height="17" viewBox="0 0 17 17"><path d="M5 6.500L8.500 10.500L12 6.500" fill="none" stroke="#484848" stroke-width="2"/></svg>
<div style="left:3px;top:650px;width:554px;height:17px;background:#f0f0f0;"></div>
<div style="left:20px;top:651px;width:346px;height:15px;background:#cdcdcd;"></div>
<svg class="ab" style="left:3px;top:650px" width="17" height="17" viewBox="0 0 17 17"><path d="M10.500 5L6.500 8.500L10.500 12" fill="none" stroke="#484848" stroke-width="2"/></svg>
<svg class="ab" style="left:540px;top:650px" width="17" height="17" viewBox="0 0 17 17"><path d="M6.500 5L10.500 8.500L6.500 12" fill="none" stroke="#484848" stroke-width="2"/></svg>
<div style="left:557px;top:650px;width:17px;height:17px;background:#f0f0f0;"></div>
<div style="left:0px;top:674px;width:576px;height:343px;background:#fff;box-shadow:inset 0 0 0 1px #a8a8a8;"></div>
<div style="left:1px;top:674px;width:574px;height:18px;background:linear-gradient(#a8a8a8 0,#b4b4b4 6%,#c4c4c4 35%,#d2d2d2 70%,#d6d6d6 100%);"></div>
<div class="ab" style="left:8px;top:674px;width:22px;height:18px;overflow:visible"><svg class="run" viewBox="0 0 22 18" width="22" height="18"><defs><linearGradient id="rg" x1="0" y1="0" x2="0" y2="1"><stop offset="0" stop-color="#ac0606"/><stop offset="1" stop-color="#62000c"/></linearGradient></defs><rect x="1.5" y="-1" width="19" height="1" rx=".5" fill="#d04040" fill-opacity=".8"/><rect y="1" width="22" height="17" rx="1.5" fill="url(#rg)"/><g transform="translate(0,1)" fill="none" stroke="#fff" stroke-linecap="round" stroke-linejoin="round"><circle cx="12.8" cy="2.1" r="1.15" fill="#fff" stroke="none"/><path d="M10.8 3.7L14 3.7L13.4 8.6L13.5 10.5L11.3 10.5L11.3 8.6Z" fill="#fff" stroke="none"/><path d="M10.9 4L9.3 5.4L9.8 7.3" stroke-width="1"/><path d="M13.8 4.1L14.6 5.7L16 5.5" stroke-width="1"/><path d="M11.9 10.3L9 11.2L6.1 10.3L5.4 11.3" stroke-width="1.25"/><path d="M12.8 10.3L14 12.9L14.8 15.2L16.6 15.5" stroke-width="1.25"/></g></svg></div>
<div class="pt" style="left:39px;top:674px;">Buy the "80/20 Running" book by Matt Fitzgerald</div>
<svg class="ab" style="left:546px;top:678px" width="26" height="10" viewBox="0 0 26 10"><rect x="1.5" y="0.5" width="8" height="8" fill="none" stroke="#111" stroke-width="1"/><path d="M1 2.5H10" stroke="#111" stroke-width="1"/><path d="M16.5 1.5L23.5 8M23.5 1.5L16.5 8" stroke="#111" stroke-width="1.5"/></svg>
<div style="left:1px;top:692px;width:574px;height:2px;background:#fff;"></div>
<div style="left:3px;top:694px;width:553px;height:303px;overflow:hidden;background:#fff" class="az">
<div style="left:0px;top:0px;width:553px;height:99px;background:#232f3e;"></div>
<div class="t" style="left:26px;top:2px;color:#fff;font-weight:bold;font-size:30px;line-height:36px;letter-spacing:-1px;transform:scaleX(0.93);transform-origin:0 0;">amazon</div>
<svg class="ab" style="left:37px;top:28px" width="58" height="16" viewBox="0 0 58 16"><path d="M4 4.500C14 13.500 36 16 52 5.500" fill="none" stroke="#f90" stroke-width="2.600" stroke-linecap="round"/><path d="M47 3.600L54.600 3.200L52.400 10.400" fill="none" stroke="#f90" stroke-width="1.800" stroke-linejoin="round" stroke-linecap="round"/></svg>
<div class="t" style="left:93px;top:29px;color:#48a3c6;font-size:11px;text-decoration:underline;letter-spacing:0.3px;line-height:14px">Try Prime</div>
<div style="left:192px;top:11px;width:66px;height:35px;background:#f3f3f3;border-right:1px solid #cdcdcd;border-radius:2px 0 0 2px;"></div>
<div class="t" style="left:203px;top:21px;color:#555;letter-spacing:0;line-height:16px">Books</div>
<svg class="ab" style="left:241px;top:27px" width="8" height="5"><path d="M0 0h8l-4 4.500z" fill="#888"/></svg>
<div style="left:258px;top:11px;width:272px;height:35px;background:#fff;"></div>
<div style="left:530px;top:11px;width:27px;height:35px;background:#febd69;"></div>
<svg class="ab" style="left:537px;top:18px" width="22" height="22" viewBox="0 0 22 22"><circle cx="12" cy="9" r="6.500" fill="none" stroke="#333" stroke-width="2"/></svg>
<div class="t" style="left:26px;top:74px;color:#fff;font-weight:bold;font-size:14px;letter-spacing:0;line-height:18px">Departments</div>
<svg class="ab" style="left:117px;top:82px" width="8" height="5"><path d="M0 0h8l-4 4.500z" fill="#aaa"/></svg>
<div class="t" style="left:192px;top:73px;color:#ccc;font-size:13px;letter-spacing:0;line-height:17px">Your Amazon.com</div>
<div class="t" style="left:319px;top:73px;color:#ccc;font-size:13px;letter-spacing:0;line-height:17px">Today's Deals</div>
<div class="t" style="left:421px;top:73px;color:#ccc;font-size:13px;letter-spacing:0;line-height:17px">Gift Cards</div>
<div class="t" style="left:499px;top:73px;color:#ccc;font-size:13px;letter-spacing:0;line-height:17px">Sell</div>
<div style="left:0px;top:99px;width:553px;height:33px;background:#fafafa;border-bottom:1px solid #ddd;"></div>
<div class="t" style="left:26px;top:108px;font-weight:bold;color:#111;letter-spacing:0;line-height:16px">Books</div>
<div class="t" style="left:85px;top:108px;color:#111;letter-spacing:0;line-height:16px">Advanced Search</div>
<div class="t" style="left:201px;top:108px;color:#111;letter-spacing:0;line-height:16px">New Releases</div>
<div class="t" style="left:300px;top:108px;color:#111;letter-spacing:0;line-height:16px">Best Sellers</div>
<div class="t" style="left:386px;top:108px;color:#111;letter-spacing:0;line-height:16px">The New York Times® Best Sellers</div>
<div class="t" style="left:16px;top:139px;color:#666;letter-spacing:0;line-height:16px">Books <span style="padding:0 1.8px">›</span> Sports &amp; Outdoors <span style="padding:0 1.8px">›</span> Individual Sports</div>
<div class="t" style="left:122px;top:178px;font-weight:bold;font-size:16px;letter-spacing:-0.7px;line-height:20px"><span style="color:#f26a0c">Look</span> <span style="color:#0b7bc1">inside</span></div>
<svg class="ab" style="left:208px;top:177px" width="14" height="18" viewBox="0 0 14 18"><path d="M1.500 2C6 0.500 8.500 4 7.500 14.500M2.500 10.500L7.500 15.500L12.500 10.500" fill="none" stroke="#0b7bc1" stroke-width="1.800"/></svg>
<svg class="ab" style="left:46px;top:194px" width="176" height="110" viewBox="0 0 176 110"><defs><linearGradient id="sky" x1="0" y1="0" x2="0" y2="1"><stop offset="0" stop-color="#a8c2e8"/><stop offset="0.600" stop-color="#e2e9f3"/></linearGradient><linearGradient id="hill" x1="0" y1="0" x2="0" y2="1"><stop offset="0" stop-color="#53668f"/><stop offset="1" stop-color="#3d5468"/></linearGradient></defs><path d="M0 2.200L16 0.300V110H0Z" fill="#242424"/><path d="M16 1.800L175 5.300V110H16Z" fill="url(#sky)"/><path d="M16 72L34 69L60 70L80 67L82 110H16Z" fill="#8fa5cc"/><path d="M16 77L40 74L70 75L82 73V110H16Z" fill="#7089b4"/><path d="M104 63L120 58L140 52L158 49.500L175 49.800V110H104Z" fill="url(#hill)"/><path d="M112 72L135 66L160 64L175 60V110H112Z" fill="#50688c"/><path d="M16 110L16 80L19.2 75.6L22.4 79.3L25.8 72.0L29.1 79.9L32.8 77.9L36.4 79.5L40.3 75.7L44.2 79.1L47.3 69.6L50.4 78.7L53.8 76.5L57.1 78.3L60.7 72.8L64.2 78.7L67.7 77.4L71.2 78.8L73.7 75.0L76.1 78.3L79.6 73.3L83.1 78.2L86.9 70.9L90.7 79.2L90.65408127880957 80L90.65408127880957 110Z" fill="#27472c"/><path d="M118 110L118 77L120.2 72.7L122.4 75.7L125.0 74.5L127.7 76.3L130.4 74.6L133.0 76.9L135.1 72.0L137.2 76.8L140.2 72.0L143.2 76.8L146.0 73.4L148.8 75.1L151.3 71.0L153.8 75.0L156.9 74.7L159.9 76.4L162.1 74.0L164.2 76.4L166.5 69.3L168.7 75.8L171.1 70.5L173.6 75.9L173.6109319412509 77L173.6109319412509 110Z" fill="#27472c"/><path d="M16 92H175V110H16Z" fill="#1f3b25"/><path d="M160 92L175 84V110H154Z" fill="#9a9468"/><path d="M70 110L72 70Q80 62 88 60L104 60Q118 64 127 71L130 110Z" fill="#17171a"/><path d="M79 110L80 72Q86 62 92 58L100 58Q110 64 113 74L114 110Z" fill="#d2202c"/><path d="M90 56L96 66L102 56L101 52H91Z" fill="#1a1a1c"/><path d="M95.600 62L96.400 62L96.800 110H95.200Z" fill="#5a0d14"/><path d="M88 40Q87 30 96 29.500Q105 30 104.500 40Q104.500 50 100 54.500Q96 57 92 54.500Q88 50 88 40Z" fill="#c69c80"/><path d="M87.500 40Q86 28.500 96 28.500Q106 28.500 105 40Q103 33.500 96 34Q89.500 33.500 87.500 40Z" fill="#4a3524"/><path d="M96 36L104.500 38Q104.500 50 100 54.500L96 56Z" fill="#a87c62" fill-opacity=".6"/><text x="94.900" y="18.300" font-family="Liberation Sans,sans-serif" font-weight="bold" font-size="7" letter-spacing="0.750" text-anchor="middle" fill="#26262a">RUN STRONGER AND RACE FASTER</text><text x="96.800" y="26.400" font-family="Liberation Sans,sans-serif" font-weight="bold" font-size="7" letter-spacing="0.750" text-anchor="middle" fill="#26262a">BY <tspan fill="#c8304a">TRAINING SLOWER</tspan></text><text x="27" y="127" font-family="Liberation Sans,sans-serif" font-weight="bold" font-style="italic" font-size="61" letter-spacing="-3.500" fill="#f4f2ee" fill-opacity="0.900">80/20</text></svg>
<div class="t" style="left:258px;top:170px;font-weight:bold;font-size:21px;letter-spacing:0;line-height:25px;color:#111">80/20 Running: Run Stronger</div>
<div class="t" style="left:258px;top:197px;font-weight:bold;font-size:21px;letter-spacing:0;line-height:25px;color:#111">Faster By Training Slower <span style="font-weight:normal;font-size:19px;color:#555">Paperback</span></div>
<div class="t" style="left:258px;top:227px;font-size:17px;letter-spacing:0;line-height:21px;color:#555">September 2, 2014</div>
<div class="t" style="left:258px;top:251px;font-size:13px;letter-spacing:0;line-height:17px;color:#111">by <span style="color:#0066c0">Matt Fitzgerald</span> <span style="color:#555">(Author),</span> <span style="color:#0066c0">Robert Johnson</span> <span style="color:#555">(Foreword)</span></div>
<svg class="ab" style="left:258px;top:274px" width="80" height="16"><path d="M8 0.800L10.200 5.600L15.400 6.100L11.500 9.600L12.600 14.800L8 12.100L3.400 14.800L4.500 9.600L0.600 6.100L5.800 5.600Z" transform="translate(0.0,0)" fill="#ffa41c" stroke="#c98208" stroke-width="0.700"/><path d="M8 0.800L10.200 5.600L15.400 6.100L11.500 9.600L12.600 14.800L8 12.100L3.400 14.800L4.500 9.600L0.600 6.100L5.800 5.600Z" transform="translate(15.6,0)" fill="#ffa41c" stroke="#c98208" stroke-width="0.700"/><path d="M8 0.800L10.200 5.600L15.400 6.100L11.500 9.600L12.600 14.800L8 12.100L3.400 14.800L4.500 9.600L0.600 6.100L5.800 5.600Z" transform="translate(31.2,0)" fill="#ffa41c" stroke="#c98208" stroke-width="0.700"/><path d="M8 0.800L10.200 5.600L15.400 6.100L11.500 9.600L12.600 14.800L8 12.100L3.400 14.800L4.500 9.600L0.600 6.100L5.800 5.600Z" transform="translate(46.8,0)" fill="#ffa41c" stroke="#c98208" stroke-width="0.700"/><path d="M8 0.800L10.200 5.600L15.400 6.100L11.500 9.600L12.600 14.800L8 12.100L3.400 14.800L4.500 9.600L0.600 6.100L5.800 5.600Z" transform="translate(62.400,0)" fill="#fff" stroke="#c98208" stroke-width="0.700"/><path d="M8 0.800L8 12.100L3.400 14.800L4.500 9.600L0.600 6.100L5.800 5.600Z" transform="translate(62.400,0)" fill="#ffa41c" stroke="#c98208" stroke-width="0.700"/></svg>
<svg class="ab" style="left:347px;top:280px" width="7" height="5"><path d="M0 0h7l-3.500 4z" fill="#555"/></svg>
<div class="t" style="left:366px;top:274px;font-size:13px;letter-spacing:0;line-height:17px;color:#0066c0">102 customer reviews</div>
<div style="left:258px;top:300px;width:295px;height:1px;background:#ddd;"></div>
</div>
<div style="left:556px;top:694px;width:18px;height:303px;background:#f0f0f0;"></div>
<div style="left:558px;top:728px;width:14px;height:14px;background:#cdcdcd;"></div>
<svg class="ab" style="left:556px;top:706px" width="18" height="18" viewBox="0 0 18 18"><path d="M3.500 12.500L9 7L14.500 12.500" fill="none" stroke="#484848" stroke-width="2.400"/></svg>
<svg class="ab" style="left:556px;top:966px" width="18" height="18" viewBox="0 0 18 18"><path d="M3.500 6L9 11.500L14.500 6" fill="none" stroke="#484848" stroke-width="2.400"/></svg>
<div style="left:3px;top:997px;width:571px;height:19px;background:#f0f0f0;"></div>
<div style="left:37px;top:999px;width:263px;height:15px;background:#cdcdcd;"></div>
<svg class="ab" style="left:15px;top:997px" width="18" height="18" viewBox="0 0 18 18"><path d="M12 3.500L6.500 9L12 14.500" fill="none" stroke="#484848" stroke-width="2.400"/></svg>
<svg class="ab" style="left:524px;top:997px" width="18" height="18" viewBox="0 0 18 18"><path d="M6 3.500L11.500 9L6 14.500" fill="none" stroke="#484848" stroke-width="2.400"/></svg>
</body></html>
